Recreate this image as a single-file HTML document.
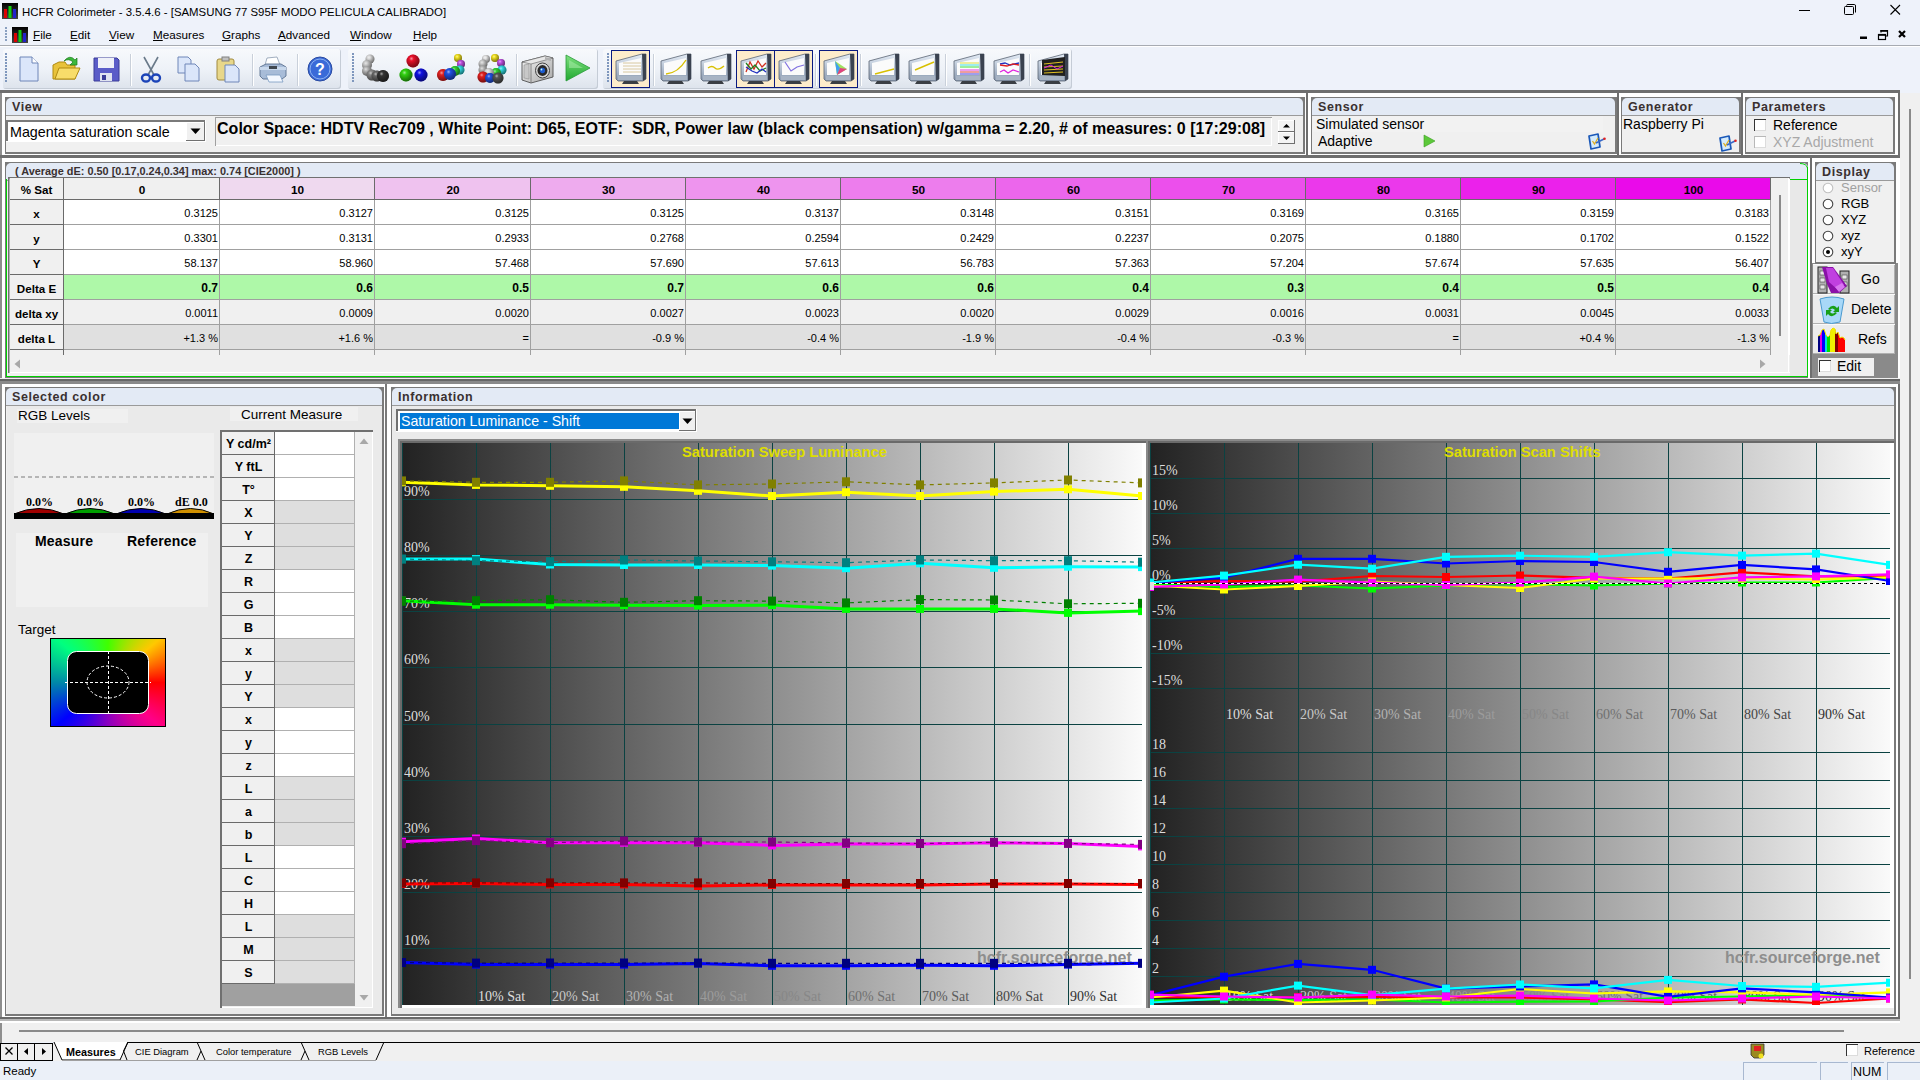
<!DOCTYPE html>
<html><head><meta charset="utf-8"><title>HCFR Colorimeter</title>
<style>
html,body{margin:0;padding:0;width:1920px;height:1080px;overflow:hidden;background:#eef2fa;font-family:"Liberation Sans",sans-serif}
body>div,body>svg{position:absolute;box-sizing:border-box}
.t{white-space:pre}
.inv{font-family:"Liberation Serif",serif}
</style></head><body>
<svg style="left:2px;top:3px" width="16" height="16" viewBox="0 0 16 16"><defs><linearGradient id="ig" x1="0" y1="0" x2="0" y2="1"><stop offset="0" stop-color="#000"/><stop offset="1" stop-color="#444"/></linearGradient></defs><rect width="16" height="16" fill="url(#ig)"/><rect x="2" y="6" width="3" height="9" fill="#d00"/><rect x="6.5" y="3" width="3" height="12" fill="#1c1"/><rect x="11" y="6" width="3" height="9" fill="#22c"/></svg>
<div class="t" style="left:22px;top:4px;font-size:11.4px;line-height:16px;color:#000">HCFR Colorimeter - 3.5.4.6 - [SAMSUNG 77 S95F MODO PELICULA CALIBRADO]</div>
<svg style="left:1790px;top:0" width="130" height="22"><line x1="9" y1="10.5" x2="20" y2="10.5" stroke="#000" stroke-width="1"/><rect x="54.5" y="6.5" width="9" height="8" rx="1" fill="none" stroke="#000"/><path d="M56.5 5.5Q56.5 4.5 58 4.5H64.5Q65.5 4.5 65.5 6V12.5" fill="none" stroke="#000"/><path d="M100.5 5L110 14.5M110 5L100.5 14.5" stroke="#000" stroke-width="1.1"/></svg>
<svg style="left:4px;top:27px" width="4" height="14"><rect x="1" y="0" width="2" height="2" fill="#8aa0c0"/><rect x="1" y="3" width="2" height="2" fill="#8aa0c0"/><rect x="1" y="6" width="2" height="2" fill="#8aa0c0"/><rect x="1" y="9" width="2" height="2" fill="#8aa0c0"/><rect x="1" y="12" width="2" height="2" fill="#8aa0c0"/></svg>
<svg style="left:12px;top:27px" width="16" height="16" viewBox="0 0 16 16"><defs><linearGradient id="ig" x1="0" y1="0" x2="0" y2="1"><stop offset="0" stop-color="#000"/><stop offset="1" stop-color="#444"/></linearGradient></defs><rect width="16" height="16" fill="url(#ig)"/><rect x="2" y="6" width="3" height="9" fill="#d00"/><rect x="6.5" y="3" width="3" height="12" fill="#1c1"/><rect x="11" y="6" width="3" height="9" fill="#22c"/></svg>
<div class="t" style="left:33px;top:27px;font-size:11.7px;line-height:16px;color:#000"><u>F</u>ile</div>
<div class="t" style="left:70px;top:27px;font-size:11.7px;line-height:16px;color:#000"><u>E</u>dit</div>
<div class="t" style="left:109px;top:27px;font-size:11.7px;line-height:16px;color:#000"><u>V</u>iew</div>
<div class="t" style="left:153px;top:27px;font-size:11.7px;line-height:16px;color:#000"><u>M</u>easures</div>
<div class="t" style="left:222px;top:27px;font-size:11.7px;line-height:16px;color:#000"><u>G</u>raphs</div>
<div class="t" style="left:278px;top:27px;font-size:11.7px;line-height:16px;color:#000"><u>A</u>dvanced</div>
<div class="t" style="left:350px;top:27px;font-size:11.7px;line-height:16px;color:#000"><u>W</u>indow</div>
<div class="t" style="left:413px;top:27px;font-size:11.7px;line-height:16px;color:#000"><u>H</u>elp</div>
<svg style="left:1850px;top:26px" width="70" height="18"><rect x="10" y="10.5" width="7" height="2.5" fill="#000"/><rect x="28.5" y="8.5" width="7" height="5" fill="none" stroke="#000" stroke-width="1.2"/><rect x="28" y="8" width="8" height="1.8" fill="#000"/><path d="M31 6.5V4.5H37.5V10H36" fill="none" stroke="#000" stroke-width="1.2"/><rect x="30.5" y="4" width="7.5" height="1.8" fill="#000"/><path d="M49 5L55 11M55 5L49 11" stroke="#000" stroke-width="2.2"/></svg>
<div style="left:0px;top:45px;width:1920px;height:1px;background:#a7abb2"></div>
<div style="left:0px;top:46px;width:1920px;height:1px;background:#fff"></div>
<div style="left:3px;top:49px;width:338px;height:40px;background:linear-gradient(#f7f9fc 0%,#eef2f8 50%,#dde3ec 100%);border-radius:3px;box-shadow:inset -1px -1px 0 #c5ccd6"></div>
<div style="left:348px;top:49px;width:250px;height:40px;background:linear-gradient(#f7f9fc 0%,#eef2f8 50%,#dde3ec 100%);border-radius:3px;box-shadow:inset -1px -1px 0 #c5ccd6"></div>
<div style="left:603px;top:49px;width:469px;height:40px;background:linear-gradient(#f7f9fc 0%,#eef2f8 50%,#dde3ec 100%);border-radius:3px;box-shadow:inset -1px -1px 0 #c5ccd6"></div>
<svg style="left:5px;top:53px" width="3" height="32"><rect x="0" y="0" width="2" height="2" fill="#7f97bd"/><rect x="0" y="3" width="2" height="2" fill="#7f97bd"/><rect x="0" y="6" width="2" height="2" fill="#7f97bd"/><rect x="0" y="9" width="2" height="2" fill="#7f97bd"/><rect x="0" y="12" width="2" height="2" fill="#7f97bd"/><rect x="0" y="15" width="2" height="2" fill="#7f97bd"/><rect x="0" y="18" width="2" height="2" fill="#7f97bd"/><rect x="0" y="21" width="2" height="2" fill="#7f97bd"/><rect x="0" y="24" width="2" height="2" fill="#7f97bd"/><rect x="0" y="27" width="2" height="2" fill="#7f97bd"/></svg>
<svg style="left:352px;top:53px" width="3" height="32"><rect x="0" y="0" width="2" height="2" fill="#7f97bd"/><rect x="0" y="3" width="2" height="2" fill="#7f97bd"/><rect x="0" y="6" width="2" height="2" fill="#7f97bd"/><rect x="0" y="9" width="2" height="2" fill="#7f97bd"/><rect x="0" y="12" width="2" height="2" fill="#7f97bd"/><rect x="0" y="15" width="2" height="2" fill="#7f97bd"/><rect x="0" y="18" width="2" height="2" fill="#7f97bd"/><rect x="0" y="21" width="2" height="2" fill="#7f97bd"/><rect x="0" y="24" width="2" height="2" fill="#7f97bd"/><rect x="0" y="27" width="2" height="2" fill="#7f97bd"/></svg>
<svg style="left:607px;top:53px" width="3" height="32"><rect x="0" y="0" width="2" height="2" fill="#7f97bd"/><rect x="0" y="3" width="2" height="2" fill="#7f97bd"/><rect x="0" y="6" width="2" height="2" fill="#7f97bd"/><rect x="0" y="9" width="2" height="2" fill="#7f97bd"/><rect x="0" y="12" width="2" height="2" fill="#7f97bd"/><rect x="0" y="15" width="2" height="2" fill="#7f97bd"/><rect x="0" y="18" width="2" height="2" fill="#7f97bd"/><rect x="0" y="21" width="2" height="2" fill="#7f97bd"/><rect x="0" y="24" width="2" height="2" fill="#7f97bd"/><rect x="0" y="27" width="2" height="2" fill="#7f97bd"/></svg>
<div style="left:130px;top:54px;width:1px;height:32px;background:#c9d0da;box-shadow:1px 0 0 #fff"></div>
<div style="left:252px;top:54px;width:1px;height:32px;background:#c9d0da;box-shadow:1px 0 0 #fff"></div>
<div style="left:297px;top:54px;width:1px;height:32px;background:#c9d0da;box-shadow:1px 0 0 #fff"></div>
<div style="left:516px;top:54px;width:1px;height:32px;background:#c9d0da;box-shadow:1px 0 0 #fff"></div>
<div style="left:653px;top:54px;width:1px;height:32px;background:#c9d0da;box-shadow:1px 0 0 #fff"></div>
<div style="left:815px;top:54px;width:1px;height:32px;background:#c9d0da;box-shadow:1px 0 0 #fff"></div>
<div style="left:860px;top:54px;width:1px;height:32px;background:#c9d0da;box-shadow:1px 0 0 #fff"></div>
<div style="left:945px;top:54px;width:1px;height:32px;background:#c9d0da;box-shadow:1px 0 0 #fff"></div>
<div style="left:1029px;top:54px;width:1px;height:32px;background:#c9d0da;box-shadow:1px 0 0 #fff"></div>
<svg style="left:12px;top:53px" width="32" height="32" viewBox="0 0 32 32"><path d="M8 4H20L26 10V28H8Z" fill="#dbe6fa" stroke="#6f86b8"/><path d="M20 4V10H26" fill="#fff" stroke="#6f86b8"/></svg>
<svg style="left:50px;top:53px" width="32" height="32" viewBox="0 0 32 32"><path d="M3 12L9 9H15L17 12H25V26H3Z" fill="#e8c23a" stroke="#b08a10"/><path d="M5 26L9 15H30L25 26Z" fill="#f8dd6a" stroke="#b08a10"/><path d="M14 8Q20 1 25 7L27 5V12H20L23 9Q19 5 14 8Z" fill="#3cb83c" stroke="#1a7a1a" stroke-width=".7"/></svg>
<svg style="left:90px;top:53px" width="32" height="32" viewBox="0 0 32 32"><path d="M4 5H27L29 7V28H4Z" fill="#5a5cc8" stroke="#3a3c98"/><rect x="8" y="5" width="16" height="10" fill="#eef0f8"/><rect x="10" y="20" width="12" height="8" fill="#dfe3f0"/><rect x="12" y="22" width="4" height="5" fill="#3a3c98"/></svg>
<svg style="left:135px;top:53px" width="32" height="32" viewBox="0 0 32 32"><path d="M9 4L19 22M23 4L13 22" stroke="#6a7a8a" stroke-width="1.6"/><ellipse cx="11" cy="25" rx="4" ry="3.5" fill="none" stroke="#1c44b8" stroke-width="2.4"/><ellipse cx="21" cy="25" rx="4" ry="3.5" fill="none" stroke="#1c44b8" stroke-width="2.4"/></svg>
<svg style="left:173px;top:53px" width="32" height="32" viewBox="0 0 32 32"><path d="M5 4H15L18 7V20H5Z" fill="#dbe6fa" stroke="#6f86b8"/><path d="M12 11H22L26 15V28H12Z" fill="#dbe6fa" stroke="#6f86b8"/></svg>
<svg style="left:212px;top:53px" width="32" height="32" viewBox="0 0 32 32"><rect x="5" y="6" width="17" height="21" rx="2" fill="#e8d78a" stroke="#a08a40"/><rect x="10" y="4" width="7" height="4" fill="#c0c0c0" stroke="#808080"/><path d="M13 12H23L27 16V29H13Z" fill="#dbe6fa" stroke="#6f86b8"/></svg>
<svg style="left:257px;top:53px" width="32" height="32" viewBox="0 0 32 32"><path d="M10 5L20 4L23 12H8Z" fill="#fff" stroke="#8a9ab0" stroke-width=".8"/><path d="M3 14L9 11H24L29 14V23L25 26H6L3 23Z" fill="#a8bcd8" stroke="#5a7090" stroke-width=".9"/><path d="M3 14H29V17H3Z" fill="#c8d8ec"/><rect x="12" y="13" width="8" height="3" fill="#404850"/><path d="M9 22H23L26 29H12Z" fill="#f4f8ff" stroke="#7a9ac0" stroke-width=".8"/></svg>
<svg style="left:304px;top:53px" width="32" height="32" viewBox="0 0 32 32"><circle cx="16" cy="16" r="12" fill="#3a6ad8" stroke="#2a4aa0"/><circle cx="16" cy="16" r="10" fill="none" stroke="#8ab0f0" stroke-width="1"/><text x="16" y="22" font-family="Liberation Sans" font-weight="bold" font-size="16" fill="#fff" text-anchor="middle">?</text></svg>
<svg style="left:0;top:0" width="0" height="0"><defs><radialGradient id="bg0" cx="0.38" cy="0.32" r="0.7"><stop offset="0" stop-color="#fff"/><stop offset="0.25" stop-color="#d8d8d8"/><stop offset="1" stop-color="#000" stop-opacity="0.9"/></radialGradient></defs></svg>
<svg style="left:0;top:0" width="0" height="0"><defs><radialGradient id="bg1" cx="0.38" cy="0.32" r="0.7"><stop offset="0" stop-color="#fff"/><stop offset="0.25" stop-color="#c8c8c8"/><stop offset="1" stop-color="#000" stop-opacity="0.9"/></radialGradient></defs></svg>
<svg style="left:0;top:0" width="0" height="0"><defs><radialGradient id="bg2" cx="0.38" cy="0.32" r="0.7"><stop offset="0" stop-color="#fff"/><stop offset="0.25" stop-color="#b8b8b8"/><stop offset="1" stop-color="#000" stop-opacity="0.9"/></radialGradient></defs></svg>
<svg style="left:0;top:0" width="0" height="0"><defs><radialGradient id="bg3" cx="0.38" cy="0.32" r="0.7"><stop offset="0" stop-color="#fff"/><stop offset="0.25" stop-color="#888"/><stop offset="1" stop-color="#000" stop-opacity="0.9"/></radialGradient></defs></svg>
<svg style="left:0;top:0" width="0" height="0"><defs><radialGradient id="bg4" cx="0.38" cy="0.32" r="0.7"><stop offset="0" stop-color="#fff"/><stop offset="0.25" stop-color="#666"/><stop offset="1" stop-color="#000" stop-opacity="0.9"/></radialGradient></defs></svg>
<svg style="left:0;top:0" width="0" height="0"><defs><radialGradient id="bg5" cx="0.38" cy="0.32" r="0.7"><stop offset="0" stop-color="#fff"/><stop offset="0.25" stop-color="#333"/><stop offset="1" stop-color="#000" stop-opacity="0.9"/></radialGradient></defs></svg>
<svg style="left:359px;top:53px" width="32" height="32" viewBox="0 0 32 32"><circle cx="11" cy="6" r="4.5" fill="#d8d8d8"/><circle cx="11" cy="6" r="4.5" fill="url(#bg0)" opacity=".55"/><circle cx="8" cy="12" r="5" fill="#c8c8c8"/><circle cx="8" cy="12" r="5" fill="url(#bg1)" opacity=".55"/><circle cx="8" cy="18" r="5" fill="#b8b8b8"/><circle cx="8" cy="18" r="5" fill="url(#bg2)" opacity=".55"/><circle cx="13" cy="22" r="5.5" fill="#888"/><circle cx="13" cy="22" r="5.5" fill="url(#bg3)" opacity=".55"/><circle cx="18" cy="23" r="5.5" fill="#666"/><circle cx="18" cy="23" r="5.5" fill="url(#bg4)" opacity=".55"/><circle cx="24" cy="23" r="6" fill="#333"/><circle cx="24" cy="23" r="6" fill="url(#bg5)" opacity=".55"/></svg>
<svg style="left:0;top:0" width="0" height="0"><defs><radialGradient id="bg6" cx="0.38" cy="0.32" r="0.7"><stop offset="0" stop-color="#fff"/><stop offset="0.25" stop-color="#e8102a"/><stop offset="1" stop-color="#000" stop-opacity="0.9"/></radialGradient></defs></svg>
<svg style="left:0;top:0" width="0" height="0"><defs><radialGradient id="bg7" cx="0.38" cy="0.32" r="0.7"><stop offset="0" stop-color="#fff"/><stop offset="0.25" stop-color="#30d010"/><stop offset="1" stop-color="#000" stop-opacity="0.9"/></radialGradient></defs></svg>
<svg style="left:0;top:0" width="0" height="0"><defs><radialGradient id="bg8" cx="0.38" cy="0.32" r="0.7"><stop offset="0" stop-color="#fff"/><stop offset="0.25" stop-color="#1010e0"/><stop offset="1" stop-color="#000" stop-opacity="0.9"/></radialGradient></defs></svg>
<svg style="left:397px;top:53px" width="32" height="32" viewBox="0 0 32 32"><circle cx="16" cy="8" r="6.5" fill="#e8102a"/><circle cx="16" cy="8" r="6.5" fill="url(#bg6)" opacity=".55"/><circle cx="9" cy="22" r="6.5" fill="#30d010"/><circle cx="9" cy="22" r="6.5" fill="url(#bg7)" opacity=".55"/><circle cx="24" cy="22" r="6.5" fill="#1010e0"/><circle cx="24" cy="22" r="6.5" fill="url(#bg8)" opacity=".55"/></svg>
<svg style="left:0;top:0" width="0" height="0"><defs><radialGradient id="bg9" cx="0.38" cy="0.32" r="0.7"><stop offset="0" stop-color="#fff"/><stop offset="0.25" stop-color="#f0e020"/><stop offset="1" stop-color="#000" stop-opacity="0.9"/></radialGradient></defs></svg>
<svg style="left:0;top:0" width="0" height="0"><defs><radialGradient id="bg10" cx="0.38" cy="0.32" r="0.7"><stop offset="0" stop-color="#fff"/><stop offset="0.25" stop-color="#c050e0"/><stop offset="1" stop-color="#000" stop-opacity="0.9"/></radialGradient></defs></svg>
<svg style="left:0;top:0" width="0" height="0"><defs><radialGradient id="bg11" cx="0.38" cy="0.32" r="0.7"><stop offset="0" stop-color="#fff"/><stop offset="0.25" stop-color="#30d8e0"/><stop offset="1" stop-color="#000" stop-opacity="0.9"/></radialGradient></defs></svg>
<svg style="left:0;top:0" width="0" height="0"><defs><radialGradient id="bg12" cx="0.38" cy="0.32" r="0.7"><stop offset="0" stop-color="#fff"/><stop offset="0.25" stop-color="#30d030"/><stop offset="1" stop-color="#000" stop-opacity="0.9"/></radialGradient></defs></svg>
<svg style="left:0;top:0" width="0" height="0"><defs><radialGradient id="bg13" cx="0.38" cy="0.32" r="0.7"><stop offset="0" stop-color="#fff"/><stop offset="0.25" stop-color="#e02020"/><stop offset="1" stop-color="#000" stop-opacity="0.9"/></radialGradient></defs></svg>
<svg style="left:0;top:0" width="0" height="0"><defs><radialGradient id="bg14" cx="0.38" cy="0.32" r="0.7"><stop offset="0" stop-color="#fff"/><stop offset="0.25" stop-color="#2050e0"/><stop offset="1" stop-color="#000" stop-opacity="0.9"/></radialGradient></defs></svg>
<svg style="left:436px;top:53px" width="32" height="32" viewBox="0 0 32 32"><circle cx="22" cy="5" r="4" fill="#f0e020"/><circle cx="22" cy="5" r="4" fill="url(#bg9)" opacity=".55"/><circle cx="25" cy="11" r="4" fill="#c050e0"/><circle cx="25" cy="11" r="4" fill="url(#bg10)" opacity=".55"/><circle cx="24" cy="17" r="4.5" fill="#30d8e0"/><circle cx="24" cy="17" r="4.5" fill="url(#bg11)" opacity=".55"/><circle cx="19" cy="18" r="5" fill="#30d030"/><circle cx="19" cy="18" r="5" fill="url(#bg12)" opacity=".55"/><circle cx="7" cy="22" r="6" fill="#e02020"/><circle cx="7" cy="22" r="6" fill="url(#bg13)" opacity=".55"/><circle cx="14" cy="21" r="6" fill="#2050e0"/><circle cx="14" cy="21" r="6" fill="url(#bg14)" opacity=".55"/></svg>
<svg style="left:0;top:0" width="0" height="0"><defs><radialGradient id="bg15" cx="0.38" cy="0.32" r="0.7"><stop offset="0" stop-color="#fff"/><stop offset="0.25" stop-color="#e0e0e0"/><stop offset="1" stop-color="#000" stop-opacity="0.9"/></radialGradient></defs></svg>
<svg style="left:0;top:0" width="0" height="0"><defs><radialGradient id="bg16" cx="0.38" cy="0.32" r="0.7"><stop offset="0" stop-color="#fff"/><stop offset="0.25" stop-color="#555"/><stop offset="1" stop-color="#000" stop-opacity="0.9"/></radialGradient></defs></svg>
<svg style="left:475px;top:53px" width="32" height="32" viewBox="0 0 32 32"><circle cx="11" cy="6" r="4" fill="#e0e0e0"/><circle cx="11" cy="6" r="4" fill="url(#bg15)" opacity=".55"/><circle cx="20" cy="5" r="4" fill="#f0e020"/><circle cx="20" cy="5" r="4" fill="url(#bg9)" opacity=".55"/><circle cx="26" cy="10" r="4" fill="#c050e0"/><circle cx="26" cy="10" r="4" fill="url(#bg10)" opacity=".55"/><circle cx="8" cy="11" r="4.5" fill="#c8c8c8"/><circle cx="8" cy="11" r="4.5" fill="url(#bg1)" opacity=".55"/><circle cx="27" cy="17" r="4.5" fill="#30d8e0"/><circle cx="27" cy="17" r="4.5" fill="url(#bg11)" opacity=".55"/><circle cx="8" cy="17" r="4.5" fill="#b8b8b8"/><circle cx="8" cy="17" r="4.5" fill="url(#bg2)" opacity=".55"/><circle cx="21" cy="20" r="5" fill="#30d030"/><circle cx="21" cy="20" r="5" fill="url(#bg12)" opacity=".55"/><circle cx="14" cy="20" r="5" fill="#d8d8d8"/><circle cx="14" cy="20" r="5" fill="url(#bg0)" opacity=".55"/><circle cx="8" cy="24" r="5.5" fill="#e02020"/><circle cx="8" cy="24" r="5.5" fill="url(#bg13)" opacity=".55"/><circle cx="15" cy="25" r="5" fill="#2050e0"/><circle cx="15" cy="25" r="5" fill="url(#bg14)" opacity=".55"/><circle cx="23" cy="25" r="5.5" fill="#555"/><circle cx="23" cy="25" r="5.5" fill="url(#bg16)" opacity=".55"/></svg>
<svg style="left:521px;top:53px" width="34" height="31" viewBox="0 0 34 31"><defs><linearGradient id="camg" x1="0" y1="0" x2="1" y2="1"><stop offset="0" stop-color="#f4f4f4"/><stop offset="1" stop-color="#a8a8a8"/></linearGradient></defs><path d="M1 9L24 3L32 5V24L10 30L1 27Z" fill="url(#camg)" stroke="#505050" stroke-width=".9"/><path d="M1 9L24 3L32 5L10 11Z" fill="#e8e8e8" stroke="#606060" stroke-width=".6"/><path d="M10 11V30" stroke="#707070" stroke-width=".8"/><path d="M3 12L8 11V26L3 25Z" fill="#c8c8c8" stroke="#888" stroke-width=".5"/><path d="M24 4L30 5.5L30 8L24 6.5Z" fill="#b0b0b0"/><ellipse cx="21.5" cy="17.5" rx="7" ry="7.5" fill="#d8d8d8" stroke="#404040" stroke-width="1"/><ellipse cx="21.5" cy="17.5" rx="5" ry="5.4" fill="#2a2a2a"/><ellipse cx="21.5" cy="17.5" rx="2.6" ry="2.8" fill="#1a5ad0"/><circle cx="20.5" cy="16.5" r="0.9" fill="#cfe"/></svg>
<svg style="left:565px;top:54px" width="27" height="28" viewBox="0 0 27 28"><defs><linearGradient id="plg" x1="0" y1="0" x2="0" y2="1"><stop offset="0" stop-color="#7ee07e"/><stop offset="1" stop-color="#20a830"/></linearGradient></defs><path d="M1 1L25 14L1 27Z" fill="url(#plg)" stroke="#2a9a3a" stroke-width=".8"/><path d="M4 6L18 14L4 14Z" fill="#b0f0b0" opacity=".5"/></svg>
<div style="left:611px;top:50px;width:39px;height:38px;background:#fdeccb;border:1.5px solid #0a1a80;box-sizing:border-box"></div>
<svg style="left:615px;top:53px" width="34" height="34" viewBox="0 0 34 34"><defs><linearGradient id="mg" x1="0" y1="0" x2="0" y2="1"><stop offset="0" stop-color="#e4ecf6"/><stop offset="1" stop-color="#8a9ab0"/></linearGradient></defs><path d="M1 8L27 1H31V26L28 28H3L1 26Z" fill="url(#mg)" stroke="#5a6474" stroke-width=".8"/><path d="M27 1H31V26L28 28Z" fill="#3a4250"/><path d="M4 10L26 5V22H4Z" fill="#fbfbfb"/><g stroke="#d8c8a0" stroke-width="1"><path d="M8 10H26M8 13H26M8 16H26M8 19H26"/></g><path d="M3 23H27V27H3Z" fill="#a8b4c4"/><path d="M9 28H22L24 31H7Z" fill="#3a3e44"/></svg>
<svg style="left:660px;top:53px" width="34" height="34" viewBox="0 0 34 34"><defs><linearGradient id="mg" x1="0" y1="0" x2="0" y2="1"><stop offset="0" stop-color="#e4ecf6"/><stop offset="1" stop-color="#8a9ab0"/></linearGradient></defs><path d="M1 8L27 1H31V26L28 28H3L1 26Z" fill="url(#mg)" stroke="#5a6474" stroke-width=".8"/><path d="M27 1H31V26L28 28Z" fill="#3a4250"/><path d="M4 10L26 5V22H4Z" fill="#fbfbfb"/><path d="M6 21Q18 20 26 7" stroke="#d8c000" stroke-width="1.4" fill="none"/><path d="M3 23H27V27H3Z" fill="#a8b4c4"/><path d="M9 28H22L24 31H7Z" fill="#3a3e44"/></svg>
<svg style="left:700px;top:53px" width="34" height="34" viewBox="0 0 34 34"><defs><linearGradient id="mg" x1="0" y1="0" x2="0" y2="1"><stop offset="0" stop-color="#e4ecf6"/><stop offset="1" stop-color="#8a9ab0"/></linearGradient></defs><path d="M1 8L27 1H31V26L28 28H3L1 26Z" fill="url(#mg)" stroke="#5a6474" stroke-width=".8"/><path d="M27 1H31V26L28 28Z" fill="#3a4250"/><path d="M4 10L26 5V22H4Z" fill="#fbfbfb"/><path d="M8 15Q12 12 15 15T24 13" stroke="#d8c000" stroke-width="1.4" fill="none"/><path d="M3 23H27V27H3Z" fill="#a8b4c4"/><path d="M9 28H22L24 31H7Z" fill="#3a3e44"/></svg>
<div style="left:736px;top:50px;width:39px;height:38px;background:#fdeccb;border:1.5px solid #0a1a80;box-sizing:border-box"></div>
<svg style="left:740px;top:53px" width="34" height="34" viewBox="0 0 34 34"><defs><linearGradient id="mg" x1="0" y1="0" x2="0" y2="1"><stop offset="0" stop-color="#e4ecf6"/><stop offset="1" stop-color="#8a9ab0"/></linearGradient></defs><path d="M1 8L27 1H31V26L28 28H3L1 26Z" fill="url(#mg)" stroke="#5a6474" stroke-width=".8"/><path d="M27 1H31V26L28 28Z" fill="#3a4250"/><path d="M4 10L26 5V22H4Z" fill="#fbfbfb"/><path d="M6 19L10 9L14 16L18 8L22 14L26 10" stroke="#d03020" stroke-width="1.3" fill="none"/><path d="M6 10L11 16L15 12L20 18L26 15" stroke="#208020" stroke-width="1.3" fill="none"/><path d="M6 14L12 18L17 20L22 16L26 19" stroke="#2030c0" stroke-width="1.3" fill="none"/><path d="M3 23H27V27H3Z" fill="#a8b4c4"/><path d="M9 28H22L24 31H7Z" fill="#3a3e44"/></svg>
<div style="left:774px;top:50px;width:39px;height:38px;background:#fdeccb;border:1.5px solid #0a1a80;box-sizing:border-box"></div>
<svg style="left:778px;top:53px" width="34" height="34" viewBox="0 0 34 34"><defs><linearGradient id="mg" x1="0" y1="0" x2="0" y2="1"><stop offset="0" stop-color="#e4ecf6"/><stop offset="1" stop-color="#8a9ab0"/></linearGradient></defs><path d="M1 8L27 1H31V26L28 28H3L1 26Z" fill="url(#mg)" stroke="#5a6474" stroke-width=".8"/><path d="M27 1H31V26L28 28Z" fill="#3a4250"/><path d="M4 10L26 5V22H4Z" fill="#fbfbfb"/><path d="M7 9L13 18L19 14L26 12" stroke="#8070e0" stroke-width="1.2" fill="none"/><path d="M3 23H27V27H3Z" fill="#a8b4c4"/><path d="M9 28H22L24 31H7Z" fill="#3a3e44"/></svg>
<div style="left:819px;top:50px;width:39px;height:38px;background:#fdeccb;border:1.5px solid #0a1a80;box-sizing:border-box"></div>
<svg style="left:823px;top:53px" width="34" height="34" viewBox="0 0 34 34"><defs><linearGradient id="mg" x1="0" y1="0" x2="0" y2="1"><stop offset="0" stop-color="#e4ecf6"/><stop offset="1" stop-color="#8a9ab0"/></linearGradient></defs><path d="M1 8L27 1H31V26L28 28H3L1 26Z" fill="url(#mg)" stroke="#5a6474" stroke-width=".8"/><path d="M27 1H31V26L28 28Z" fill="#3a4250"/><path d="M4 10L26 5V22H4Z" fill="#fbfbfb"/><path d="M12 8L24 16L14 22Z" fill="#a0e060"/><path d="M12 8L17 15L14 22Z" fill="#40a0f0"/><path d="M17 15L24 16L14 22Z" fill="#e04080"/><path d="M3 23H27V27H3Z" fill="#a8b4c4"/><path d="M9 28H22L24 31H7Z" fill="#3a3e44"/></svg>
<svg style="left:868px;top:53px" width="34" height="34" viewBox="0 0 34 34"><defs><linearGradient id="mg" x1="0" y1="0" x2="0" y2="1"><stop offset="0" stop-color="#e4ecf6"/><stop offset="1" stop-color="#8a9ab0"/></linearGradient></defs><path d="M1 8L27 1H31V26L28 28H3L1 26Z" fill="url(#mg)" stroke="#5a6474" stroke-width=".8"/><path d="M27 1H31V26L28 28Z" fill="#3a4250"/><path d="M4 10L26 5V22H4Z" fill="#fbfbfb"/><path d="M7 21L26 16" stroke="#d8c000" stroke-width="1.4"/><path d="M3 23H27V27H3Z" fill="#a8b4c4"/><path d="M9 28H22L24 31H7Z" fill="#3a3e44"/></svg>
<svg style="left:908px;top:53px" width="34" height="34" viewBox="0 0 34 34"><defs><linearGradient id="mg" x1="0" y1="0" x2="0" y2="1"><stop offset="0" stop-color="#e4ecf6"/><stop offset="1" stop-color="#8a9ab0"/></linearGradient></defs><path d="M1 8L27 1H31V26L28 28H3L1 26Z" fill="url(#mg)" stroke="#5a6474" stroke-width=".8"/><path d="M27 1H31V26L28 28Z" fill="#3a4250"/><path d="M4 10L26 5V22H4Z" fill="#fbfbfb"/><path d="M7 17L26 9" stroke="#d8c000" stroke-width="1.4"/><path d="M3 23H27V27H3Z" fill="#a8b4c4"/><path d="M9 28H22L24 31H7Z" fill="#3a3e44"/></svg>
<svg style="left:953px;top:53px" width="34" height="34" viewBox="0 0 34 34"><defs><linearGradient id="mg" x1="0" y1="0" x2="0" y2="1"><stop offset="0" stop-color="#e4ecf6"/><stop offset="1" stop-color="#8a9ab0"/></linearGradient></defs><path d="M1 8L27 1H31V26L28 28H3L1 26Z" fill="url(#mg)" stroke="#5a6474" stroke-width=".8"/><path d="M27 1H31V26L28 28Z" fill="#3a4250"/><path d="M4 10L26 5V22H4Z" fill="#fbfbfb"/><path d="M7 10H26" stroke="#e0e040"/><path d="M7 12H26" stroke="#40e0e0"/><path d="M7 14H26" stroke="#40e040"/><path d="M7 17H26" stroke="#e040e0"/><path d="M7 19H26" stroke="#e04040"/><path d="M7 21H26" stroke="#4040e0"/><path d="M3 23H27V27H3Z" fill="#a8b4c4"/><path d="M9 28H22L24 31H7Z" fill="#3a3e44"/></svg>
<svg style="left:993px;top:53px" width="34" height="34" viewBox="0 0 34 34"><defs><linearGradient id="mg" x1="0" y1="0" x2="0" y2="1"><stop offset="0" stop-color="#e4ecf6"/><stop offset="1" stop-color="#8a9ab0"/></linearGradient></defs><path d="M1 8L27 1H31V26L28 28H3L1 26Z" fill="url(#mg)" stroke="#5a6474" stroke-width=".8"/><path d="M27 1H31V26L28 28Z" fill="#3a4250"/><path d="M4 10L26 5V22H4Z" fill="#fbfbfb"/><path d="M7 11L12 10L17 12L26 10" stroke="#2030c0" stroke-width="1.3" fill="none"/><path d="M7 12L14 13L20 11L26 12" stroke="#e02020" stroke-width="1.3" fill="none"/><path d="M7 19L11 17L15 20L20 17L26 19" stroke="#e020e0" stroke-width="1.3" fill="none"/><path d="M3 23H27V27H3Z" fill="#a8b4c4"/><path d="M9 28H22L24 31H7Z" fill="#3a3e44"/></svg>
<svg style="left:1037px;top:53px" width="34" height="34" viewBox="0 0 34 34"><defs><linearGradient id="mg" x1="0" y1="0" x2="0" y2="1"><stop offset="0" stop-color="#e4ecf6"/><stop offset="1" stop-color="#8a9ab0"/></linearGradient></defs><path d="M1 8L27 1H31V26L28 28H3L1 26Z" fill="url(#mg)" stroke="#5a6474" stroke-width=".8"/><path d="M27 1H31V26L28 28Z" fill="#3a4250"/><path d="M4 10L26 5V22H4Z" fill="#fbfbfb"/><path d="M5 7L28 4V23L5 22Z" fill="#202020"/><path d="M7 11L26 9M7 14L26 13M7 17L26 16M7 20L26 19" stroke="#e0c020" stroke-width="1"/><path d="M7 15L14 12L20 16L26 13" stroke="#e020e0" stroke-width="1" fill="none"/><path d="M3 23H27V27H3Z" fill="#a8b4c4"/><path d="M9 28H22L24 31H7Z" fill="#3a3e44"/></svg>
<div style="left:0px;top:90px;width:1900px;height:3px;background:#6e6e6e"></div>
<div style="left:0px;top:93px;width:2px;height:950px;background:#8e8e8e"></div>
<div style="left:2px;top:93px;width:1898px;height:65px;background:#fff"></div>
<div style="left:5px;top:97px;width:1300px;height:57px;background:#7a7a7a"></div>
<div style="left:6px;top:98px;width:1297px;height:17px;background:#e3eaf5;border-radius:5px 5px 0 0"></div>
<div style="left:6px;top:115px;width:1297px;height:1px;background:#9a9a9a"></div>
<div style="left:6px;top:116px;width:1297px;height:36px;background:#f0f0f0"></div>
<div class="t" style="left:12px;top:100px;font-weight:bold;font-size:12.5px;line-height:15px;color:#3a3030;letter-spacing:.6px;">View</div>
<div style="left:1306px;top:93px;width:2px;height:62px;background:#6e6e6e"></div>
<div style="left:1311px;top:97px;width:306px;height:57px;background:#7a7a7a"></div>
<div style="left:1312px;top:98px;width:303px;height:17px;background:#e3eaf5;border-radius:5px 5px 0 0"></div>
<div style="left:1312px;top:115px;width:303px;height:1px;background:#9a9a9a"></div>
<div style="left:1312px;top:116px;width:303px;height:36px;background:#f0f0f0"></div>
<div class="t" style="left:1318px;top:100px;font-weight:bold;font-size:12.5px;line-height:15px;color:#3a3030;letter-spacing:.6px;">Sensor</div>
<div style="left:1617px;top:93px;width:2px;height:62px;background:#6e6e6e"></div>
<div style="left:1621px;top:97px;width:120px;height:57px;background:#7a7a7a"></div>
<div style="left:1622px;top:98px;width:117px;height:17px;background:#e3eaf5;border-radius:5px 5px 0 0"></div>
<div style="left:1622px;top:115px;width:117px;height:1px;background:#9a9a9a"></div>
<div style="left:1622px;top:116px;width:117px;height:36px;background:#f0f0f0"></div>
<div class="t" style="left:1628px;top:100px;font-weight:bold;font-size:12.5px;line-height:15px;color:#3a3030;letter-spacing:.6px;">Generator</div>
<div style="left:1741px;top:93px;width:2px;height:62px;background:#6e6e6e"></div>
<div style="left:1745px;top:97px;width:150px;height:57px;background:#7a7a7a"></div>
<div style="left:1746px;top:98px;width:147px;height:17px;background:#e3eaf5;border-radius:5px 5px 0 0"></div>
<div style="left:1746px;top:115px;width:147px;height:1px;background:#9a9a9a"></div>
<div style="left:1746px;top:116px;width:147px;height:36px;background:#f0f0f0"></div>
<div class="t" style="left:1752px;top:100px;font-weight:bold;font-size:12.5px;line-height:15px;color:#3a3030;letter-spacing:.6px;">Parameters</div>
<div style="left:1898px;top:93px;width:2px;height:927px;background:#6e6e6e"></div>
<div style="left:0px;top:155px;width:1900px;height:3px;background:#6e6e6e"></div>
<div style="left:1900px;top:93px;width:20px;height:950px;background:#f0f0f0"></div>
<div style="left:1909px;top:109px;width:2px;height:870px;background:#8a8a8a"></div>
<div style="left:6px;top:120px;width:200px;height:22px;background:#7a7a7a;box-shadow:inset -1px -1px 0 #fff"></div>
<div style="left:8px;top:122px;width:197px;height:19px;background:#fff"></div>
<div class="t" style="left:10px;top:123px;font-size:14.3px;line-height:18px;color:#000">Magenta saturation scale</div>
<div style="left:186px;top:122px;width:19px;height:19px;background:#f0f0f0;box-shadow:inset -1px -1px 0 #707070,inset 1px 1px 0 #fff"></div>
<svg style="left:190px;top:128px" width="11" height="7"><path d="M0.5 0.5H10.5L5.5 6Z" fill="#000"/></svg>
<div style="left:215px;top:117px;width:1057px;height:29px;background:#f0f0f0;box-shadow:inset 1px 1px 0 #a0a0a0,inset -1px -1px 0 #fff"></div>
<div class="t" style="left:217px;top:119px;font-weight:bold;font-size:16px;line-height:20px;color:#000;letter-spacing:.03px">Color Space: HDTV Rec709 , White Point: D65, EOTF:&nbsp; SDR, Power law (black compensation) w/gamma = 2.20, # of measures: 0 [17:29:08]</div>
<div style="left:1278px;top:120px;width:17px;height:12px;background:#f4f4f4;box-shadow:inset -1px -1px 0 #707070,inset 1px 1px 0 #fff"></div>
<svg style="left:1281px;top:121px" width="11" height="10"><path d="M2 6.5L5.5 3L9 6.5Z" fill="#000"/></svg>
<div style="left:1278px;top:132px;width:17px;height:12px;background:#f4f4f4;box-shadow:inset -1px -1px 0 #707070,inset 1px 1px 0 #fff"></div>
<svg style="left:1281px;top:133px" width="11" height="10"><path d="M2 3.5H9L5.5 7Z" fill="#000"/></svg>
<div style="left:1313px;top:116px;width:290px;height:16px;background:#f2f2f2"></div>
<div class="t" style="left:1316px;top:116px;font-size:14px;line-height:17px;color:#000">Simulated sensor</div>
<div class="t" style="left:1318px;top:133px;font-size:14px;line-height:17px;color:#000">Adaptive</div>
<svg style="left:1423px;top:134px" width="14" height="14"><path d="M1 1L12 7L1 13Z" fill="#5cc83a" stroke="#3aa020" stroke-width=".6"/></svg>
<svg style="left:1587px;top:131px" width="20" height="20" viewBox="0 0 20 20"><path d="M2 5L11 3L13 16L4 18Z" fill="#d4ebfc" stroke="#1a58b8" stroke-width="1.7" stroke-linejoin="round"/><path d="M5.5 10L7.5 13L11 7" fill="none" stroke="#e0b020" stroke-width="1.3"/><path d="M9 12L17 8" stroke="#3a6ac8" stroke-width="1.6"/><circle cx="17.5" cy="7.8" r="1.3" fill="#e02020"/></svg>
<div class="t" style="left:1623px;top:116px;font-size:14px;line-height:17px;color:#000">Raspberry Pi</div>
<svg style="left:1718px;top:133px" width="20" height="20" viewBox="0 0 20 20"><path d="M2 5L11 3L13 16L4 18Z" fill="#d4ebfc" stroke="#1a58b8" stroke-width="1.7" stroke-linejoin="round"/><path d="M5.5 10L7.5 13L11 7" fill="none" stroke="#e0b020" stroke-width="1.3"/><path d="M9 12L17 8" stroke="#3a6ac8" stroke-width="1.6"/><circle cx="17.5" cy="7.8" r="1.3" fill="#e02020"/></svg>
<div style="left:1754px;top:119px;width:12px;height:12px;background:#fff;box-shadow:inset 1px 1px 0 #333,inset -1px -1px 0 #dcdcdc"></div>
<div class="t" style="left:1773px;top:117px;font-size:14px;line-height:17px;color:#000">Reference</div>
<div style="left:1754px;top:136px;width:12px;height:12px;background:#fff;box-shadow:inset 1px 1px 0 #b8b8b8,inset -1px -1px 0 #dcdcdc"></div>
<div class="t" style="left:1773px;top:134px;font-size:14px;line-height:17px;color:#a8a8a8">XYZ Adjustment</div>
<div style="left:2px;top:158px;width:1898px;height:222px;background:#fff"></div>
<div style="left:5px;top:162px;width:1805px;height:216px;background:#7a7a7a"></div>
<div style="left:6px;top:163px;width:1802px;height:17px;background:#e3eaf5;border-radius:5px 5px 0 0"></div>
<div style="left:6px;top:180px;width:1802px;height:1px;background:#9a9a9a"></div>
<div style="left:6px;top:181px;width:1802px;height:195px;background:#f0f0f0"></div>
<div class="t" style="left:15px;top:164px;font-weight:bold;font-size:10.9px;line-height:14px;color:#3a3030">( Average dE: 0.50 [0.17,0.24,0.34] max: 0.74 [CIE2000] )</div>
<div style="left:6px;top:179px;width:1px;height:198px;background:#00d000"></div>
<div style="left:6px;top:376px;width:1802px;height:1px;background:#00d000"></div>
<div style="left:1807px;top:167px;width:1px;height:210px;background:#00d000"></div>
<div style="left:1790px;top:179px;width:17px;height:1px;background:#00d000"></div>
<svg style="left:1800px;top:163px" width="9" height="6"><path d="M0 0.5Q6.5 0.5 7.5 5" fill="none" stroke="#00d000"/></svg>
<div style="left:1790px;top:180px;width:17px;height:196px;background:#e8e8e8"></div>
<div style="left:8px;top:177px;width:1782px;height:196px;background:#f0f0f0;box-shadow:inset 1.5px 1.5px 0 #707070,inset -1px -1px 0 #fff"></div>
<div style="left:10px;top:178px;width:53px;height:21px;background:#f0f0f0"></div>
<div style="left:10px;top:199px;width:53px;height:1px;background:#6a6a6a"></div>
<div class="t" style="left:10px;top:179px;width:53px;text-align:center;font-weight:bold;font-size:11.6px;line-height:22px;color:#000">% Sat</div>
<div style="left:10px;top:200px;width:53px;height:24px;background:#f0f0f0"></div>
<div style="left:10px;top:224px;width:53px;height:1px;background:#6a6a6a"></div>
<div class="t" style="left:10px;top:201px;width:53px;text-align:center;font-weight:bold;font-size:11.6px;line-height:25px;color:#000">x</div>
<div style="left:10px;top:225px;width:53px;height:24px;background:#f0f0f0"></div>
<div style="left:10px;top:249px;width:53px;height:1px;background:#6a6a6a"></div>
<div class="t" style="left:10px;top:226px;width:53px;text-align:center;font-weight:bold;font-size:11.6px;line-height:25px;color:#000">y</div>
<div style="left:10px;top:250px;width:53px;height:24px;background:#f0f0f0"></div>
<div style="left:10px;top:274px;width:53px;height:1px;background:#6a6a6a"></div>
<div class="t" style="left:10px;top:251px;width:53px;text-align:center;font-weight:bold;font-size:11.6px;line-height:25px;color:#000">Y</div>
<div style="left:10px;top:275px;width:53px;height:24px;background:#f0f0f0"></div>
<div style="left:10px;top:299px;width:53px;height:1px;background:#6a6a6a"></div>
<div class="t" style="left:10px;top:276px;width:53px;text-align:center;font-weight:bold;font-size:11.6px;line-height:25px;color:#000">Delta E</div>
<div style="left:10px;top:300px;width:53px;height:24px;background:#f0f0f0"></div>
<div style="left:10px;top:324px;width:53px;height:1px;background:#6a6a6a"></div>
<div class="t" style="left:10px;top:301px;width:53px;text-align:center;font-weight:bold;font-size:11.6px;line-height:25px;color:#000">delta xy</div>
<div style="left:10px;top:325px;width:53px;height:24px;background:#f0f0f0"></div>
<div style="left:10px;top:349px;width:53px;height:1px;background:#6a6a6a"></div>
<div class="t" style="left:10px;top:326px;width:53px;text-align:center;font-weight:bold;font-size:11.6px;line-height:25px;color:#000">delta L</div>
<div style="left:10px;top:350px;width:53px;height:5px;background:#f0f0f0"></div>
<div style="left:63px;top:178px;width:1px;height:177px;background:#6a6a6a"></div>
<div style="left:64px;top:178px;width:156px;height:22px;background:#f0f0f0"></div>
<div style="left:219px;top:178px;width:1px;height:22px;background:#6a6a6a"></div>
<div class="t" style="left:64px;top:179px;width:156px;text-align:center;font-weight:bold;font-size:11.8px;line-height:22px;color:#000">0</div>
<div style="left:220px;top:178px;width:155px;height:22px;background:rgb(239,217,239)"></div>
<div style="left:374px;top:178px;width:1px;height:22px;background:#6a6a6a"></div>
<div class="t" style="left:220px;top:179px;width:155px;text-align:center;font-weight:bold;font-size:11.8px;line-height:22px;color:#000">10</div>
<div style="left:375px;top:178px;width:156px;height:22px;background:rgb(239,194,239)"></div>
<div style="left:530px;top:178px;width:1px;height:22px;background:#6a6a6a"></div>
<div class="t" style="left:375px;top:179px;width:156px;text-align:center;font-weight:bold;font-size:11.8px;line-height:22px;color:#000">20</div>
<div style="left:531px;top:178px;width:155px;height:22px;background:rgb(238,171,238)"></div>
<div style="left:685px;top:178px;width:1px;height:22px;background:#6a6a6a"></div>
<div class="t" style="left:531px;top:179px;width:155px;text-align:center;font-weight:bold;font-size:11.8px;line-height:22px;color:#000">30</div>
<div style="left:686px;top:178px;width:155px;height:22px;background:rgb(238,148,238)"></div>
<div style="left:840px;top:178px;width:1px;height:22px;background:#6a6a6a"></div>
<div class="t" style="left:686px;top:179px;width:155px;text-align:center;font-weight:bold;font-size:11.8px;line-height:22px;color:#000">40</div>
<div style="left:841px;top:178px;width:155px;height:22px;background:rgb(237,125,237)"></div>
<div style="left:995px;top:178px;width:1px;height:22px;background:#6a6a6a"></div>
<div class="t" style="left:841px;top:179px;width:155px;text-align:center;font-weight:bold;font-size:11.8px;line-height:22px;color:#000">50</div>
<div style="left:996px;top:178px;width:155px;height:22px;background:rgb(236,102,236)"></div>
<div style="left:1150px;top:178px;width:1px;height:22px;background:#6a6a6a"></div>
<div class="t" style="left:996px;top:179px;width:155px;text-align:center;font-weight:bold;font-size:11.8px;line-height:22px;color:#000">60</div>
<div style="left:1151px;top:178px;width:155px;height:22px;background:rgb(236,79,236)"></div>
<div style="left:1305px;top:178px;width:1px;height:22px;background:#6a6a6a"></div>
<div class="t" style="left:1151px;top:179px;width:155px;text-align:center;font-weight:bold;font-size:11.8px;line-height:22px;color:#000">70</div>
<div style="left:1306px;top:178px;width:155px;height:22px;background:rgb(235,56,235)"></div>
<div style="left:1460px;top:178px;width:1px;height:22px;background:#6a6a6a"></div>
<div class="t" style="left:1306px;top:179px;width:155px;text-align:center;font-weight:bold;font-size:11.8px;line-height:22px;color:#000">80</div>
<div style="left:1461px;top:178px;width:155px;height:22px;background:rgb(235,33,235)"></div>
<div style="left:1615px;top:178px;width:1px;height:22px;background:#6a6a6a"></div>
<div class="t" style="left:1461px;top:179px;width:155px;text-align:center;font-weight:bold;font-size:11.8px;line-height:22px;color:#000">90</div>
<div style="left:1616px;top:178px;width:155px;height:22px;background:rgb(234,10,234)"></div>
<div style="left:1770px;top:178px;width:1px;height:22px;background:#6a6a6a"></div>
<div class="t" style="left:1616px;top:179px;width:155px;text-align:center;font-weight:bold;font-size:11.8px;line-height:22px;color:#000">100</div>
<div style="left:64px;top:199px;width:1706px;height:1px;background:#6a6a6a"></div>
<div style="left:64px;top:200px;width:1706px;height:24px;background:#fff"></div>
<div style="left:64px;top:224px;width:1706px;height:1px;background:#a0a0a0"></div>
<div style="left:219px;top:200px;width:1px;height:25px;background:#a0a0a0"></div>
<div class="t" style="left:64px;top:201px;width:154px;text-align:right;font-size:11px;line-height:25px;color:#000">0.3125</div>
<div style="left:374px;top:200px;width:1px;height:25px;background:#a0a0a0"></div>
<div class="t" style="left:220px;top:201px;width:153px;text-align:right;font-size:11px;line-height:25px;color:#000">0.3127</div>
<div style="left:530px;top:200px;width:1px;height:25px;background:#a0a0a0"></div>
<div class="t" style="left:375px;top:201px;width:154px;text-align:right;font-size:11px;line-height:25px;color:#000">0.3125</div>
<div style="left:685px;top:200px;width:1px;height:25px;background:#a0a0a0"></div>
<div class="t" style="left:531px;top:201px;width:153px;text-align:right;font-size:11px;line-height:25px;color:#000">0.3125</div>
<div style="left:840px;top:200px;width:1px;height:25px;background:#a0a0a0"></div>
<div class="t" style="left:686px;top:201px;width:153px;text-align:right;font-size:11px;line-height:25px;color:#000">0.3137</div>
<div style="left:995px;top:200px;width:1px;height:25px;background:#a0a0a0"></div>
<div class="t" style="left:841px;top:201px;width:153px;text-align:right;font-size:11px;line-height:25px;color:#000">0.3148</div>
<div style="left:1150px;top:200px;width:1px;height:25px;background:#a0a0a0"></div>
<div class="t" style="left:996px;top:201px;width:153px;text-align:right;font-size:11px;line-height:25px;color:#000">0.3151</div>
<div style="left:1305px;top:200px;width:1px;height:25px;background:#a0a0a0"></div>
<div class="t" style="left:1151px;top:201px;width:153px;text-align:right;font-size:11px;line-height:25px;color:#000">0.3169</div>
<div style="left:1460px;top:200px;width:1px;height:25px;background:#a0a0a0"></div>
<div class="t" style="left:1306px;top:201px;width:153px;text-align:right;font-size:11px;line-height:25px;color:#000">0.3165</div>
<div style="left:1615px;top:200px;width:1px;height:25px;background:#a0a0a0"></div>
<div class="t" style="left:1461px;top:201px;width:153px;text-align:right;font-size:11px;line-height:25px;color:#000">0.3159</div>
<div style="left:1770px;top:200px;width:1px;height:25px;background:#a0a0a0"></div>
<div class="t" style="left:1616px;top:201px;width:153px;text-align:right;font-size:11px;line-height:25px;color:#000">0.3183</div>
<div style="left:64px;top:225px;width:1706px;height:24px;background:#fff"></div>
<div style="left:64px;top:249px;width:1706px;height:1px;background:#a0a0a0"></div>
<div style="left:219px;top:225px;width:1px;height:25px;background:#a0a0a0"></div>
<div class="t" style="left:64px;top:226px;width:154px;text-align:right;font-size:11px;line-height:25px;color:#000">0.3301</div>
<div style="left:374px;top:225px;width:1px;height:25px;background:#a0a0a0"></div>
<div class="t" style="left:220px;top:226px;width:153px;text-align:right;font-size:11px;line-height:25px;color:#000">0.3131</div>
<div style="left:530px;top:225px;width:1px;height:25px;background:#a0a0a0"></div>
<div class="t" style="left:375px;top:226px;width:154px;text-align:right;font-size:11px;line-height:25px;color:#000">0.2933</div>
<div style="left:685px;top:225px;width:1px;height:25px;background:#a0a0a0"></div>
<div class="t" style="left:531px;top:226px;width:153px;text-align:right;font-size:11px;line-height:25px;color:#000">0.2768</div>
<div style="left:840px;top:225px;width:1px;height:25px;background:#a0a0a0"></div>
<div class="t" style="left:686px;top:226px;width:153px;text-align:right;font-size:11px;line-height:25px;color:#000">0.2594</div>
<div style="left:995px;top:225px;width:1px;height:25px;background:#a0a0a0"></div>
<div class="t" style="left:841px;top:226px;width:153px;text-align:right;font-size:11px;line-height:25px;color:#000">0.2429</div>
<div style="left:1150px;top:225px;width:1px;height:25px;background:#a0a0a0"></div>
<div class="t" style="left:996px;top:226px;width:153px;text-align:right;font-size:11px;line-height:25px;color:#000">0.2237</div>
<div style="left:1305px;top:225px;width:1px;height:25px;background:#a0a0a0"></div>
<div class="t" style="left:1151px;top:226px;width:153px;text-align:right;font-size:11px;line-height:25px;color:#000">0.2075</div>
<div style="left:1460px;top:225px;width:1px;height:25px;background:#a0a0a0"></div>
<div class="t" style="left:1306px;top:226px;width:153px;text-align:right;font-size:11px;line-height:25px;color:#000">0.1880</div>
<div style="left:1615px;top:225px;width:1px;height:25px;background:#a0a0a0"></div>
<div class="t" style="left:1461px;top:226px;width:153px;text-align:right;font-size:11px;line-height:25px;color:#000">0.1702</div>
<div style="left:1770px;top:225px;width:1px;height:25px;background:#a0a0a0"></div>
<div class="t" style="left:1616px;top:226px;width:153px;text-align:right;font-size:11px;line-height:25px;color:#000">0.1522</div>
<div style="left:64px;top:250px;width:1706px;height:24px;background:#fff"></div>
<div style="left:64px;top:274px;width:1706px;height:1px;background:#a0a0a0"></div>
<div style="left:219px;top:250px;width:1px;height:25px;background:#a0a0a0"></div>
<div class="t" style="left:64px;top:251px;width:154px;text-align:right;font-size:11px;line-height:25px;color:#000">58.137</div>
<div style="left:374px;top:250px;width:1px;height:25px;background:#a0a0a0"></div>
<div class="t" style="left:220px;top:251px;width:153px;text-align:right;font-size:11px;line-height:25px;color:#000">58.960</div>
<div style="left:530px;top:250px;width:1px;height:25px;background:#a0a0a0"></div>
<div class="t" style="left:375px;top:251px;width:154px;text-align:right;font-size:11px;line-height:25px;color:#000">57.468</div>
<div style="left:685px;top:250px;width:1px;height:25px;background:#a0a0a0"></div>
<div class="t" style="left:531px;top:251px;width:153px;text-align:right;font-size:11px;line-height:25px;color:#000">57.690</div>
<div style="left:840px;top:250px;width:1px;height:25px;background:#a0a0a0"></div>
<div class="t" style="left:686px;top:251px;width:153px;text-align:right;font-size:11px;line-height:25px;color:#000">57.613</div>
<div style="left:995px;top:250px;width:1px;height:25px;background:#a0a0a0"></div>
<div class="t" style="left:841px;top:251px;width:153px;text-align:right;font-size:11px;line-height:25px;color:#000">56.783</div>
<div style="left:1150px;top:250px;width:1px;height:25px;background:#a0a0a0"></div>
<div class="t" style="left:996px;top:251px;width:153px;text-align:right;font-size:11px;line-height:25px;color:#000">57.363</div>
<div style="left:1305px;top:250px;width:1px;height:25px;background:#a0a0a0"></div>
<div class="t" style="left:1151px;top:251px;width:153px;text-align:right;font-size:11px;line-height:25px;color:#000">57.204</div>
<div style="left:1460px;top:250px;width:1px;height:25px;background:#a0a0a0"></div>
<div class="t" style="left:1306px;top:251px;width:153px;text-align:right;font-size:11px;line-height:25px;color:#000">57.674</div>
<div style="left:1615px;top:250px;width:1px;height:25px;background:#a0a0a0"></div>
<div class="t" style="left:1461px;top:251px;width:153px;text-align:right;font-size:11px;line-height:25px;color:#000">57.635</div>
<div style="left:1770px;top:250px;width:1px;height:25px;background:#a0a0a0"></div>
<div class="t" style="left:1616px;top:251px;width:153px;text-align:right;font-size:11px;line-height:25px;color:#000">56.407</div>
<div style="left:64px;top:275px;width:1706px;height:24px;background:#aef8a8"></div>
<div style="left:64px;top:299px;width:1706px;height:1px;background:#a0a0a0"></div>
<div style="left:219px;top:275px;width:1px;height:25px;background:#a0a0a0"></div>
<div class="t" style="left:64px;top:276px;width:154px;text-align:right;font-weight:bold;font-size:12px;line-height:25px;color:#000">0.7</div>
<div style="left:374px;top:275px;width:1px;height:25px;background:#a0a0a0"></div>
<div class="t" style="left:220px;top:276px;width:153px;text-align:right;font-weight:bold;font-size:12px;line-height:25px;color:#000">0.6</div>
<div style="left:530px;top:275px;width:1px;height:25px;background:#a0a0a0"></div>
<div class="t" style="left:375px;top:276px;width:154px;text-align:right;font-weight:bold;font-size:12px;line-height:25px;color:#000">0.5</div>
<div style="left:685px;top:275px;width:1px;height:25px;background:#a0a0a0"></div>
<div class="t" style="left:531px;top:276px;width:153px;text-align:right;font-weight:bold;font-size:12px;line-height:25px;color:#000">0.7</div>
<div style="left:840px;top:275px;width:1px;height:25px;background:#a0a0a0"></div>
<div class="t" style="left:686px;top:276px;width:153px;text-align:right;font-weight:bold;font-size:12px;line-height:25px;color:#000">0.6</div>
<div style="left:995px;top:275px;width:1px;height:25px;background:#a0a0a0"></div>
<div class="t" style="left:841px;top:276px;width:153px;text-align:right;font-weight:bold;font-size:12px;line-height:25px;color:#000">0.6</div>
<div style="left:1150px;top:275px;width:1px;height:25px;background:#a0a0a0"></div>
<div class="t" style="left:996px;top:276px;width:153px;text-align:right;font-weight:bold;font-size:12px;line-height:25px;color:#000">0.4</div>
<div style="left:1305px;top:275px;width:1px;height:25px;background:#a0a0a0"></div>
<div class="t" style="left:1151px;top:276px;width:153px;text-align:right;font-weight:bold;font-size:12px;line-height:25px;color:#000">0.3</div>
<div style="left:1460px;top:275px;width:1px;height:25px;background:#a0a0a0"></div>
<div class="t" style="left:1306px;top:276px;width:153px;text-align:right;font-weight:bold;font-size:12px;line-height:25px;color:#000">0.4</div>
<div style="left:1615px;top:275px;width:1px;height:25px;background:#a0a0a0"></div>
<div class="t" style="left:1461px;top:276px;width:153px;text-align:right;font-weight:bold;font-size:12px;line-height:25px;color:#000">0.5</div>
<div style="left:1770px;top:275px;width:1px;height:25px;background:#a0a0a0"></div>
<div class="t" style="left:1616px;top:276px;width:153px;text-align:right;font-weight:bold;font-size:12px;line-height:25px;color:#000">0.4</div>
<div style="left:64px;top:300px;width:1706px;height:24px;background:#f0f0f0"></div>
<div style="left:64px;top:324px;width:1706px;height:1px;background:#a0a0a0"></div>
<div style="left:219px;top:300px;width:1px;height:25px;background:#a0a0a0"></div>
<div class="t" style="left:64px;top:301px;width:154px;text-align:right;font-size:11px;line-height:25px;color:#000">0.0011</div>
<div style="left:374px;top:300px;width:1px;height:25px;background:#a0a0a0"></div>
<div class="t" style="left:220px;top:301px;width:153px;text-align:right;font-size:11px;line-height:25px;color:#000">0.0009</div>
<div style="left:530px;top:300px;width:1px;height:25px;background:#a0a0a0"></div>
<div class="t" style="left:375px;top:301px;width:154px;text-align:right;font-size:11px;line-height:25px;color:#000">0.0020</div>
<div style="left:685px;top:300px;width:1px;height:25px;background:#a0a0a0"></div>
<div class="t" style="left:531px;top:301px;width:153px;text-align:right;font-size:11px;line-height:25px;color:#000">0.0027</div>
<div style="left:840px;top:300px;width:1px;height:25px;background:#a0a0a0"></div>
<div class="t" style="left:686px;top:301px;width:153px;text-align:right;font-size:11px;line-height:25px;color:#000">0.0023</div>
<div style="left:995px;top:300px;width:1px;height:25px;background:#a0a0a0"></div>
<div class="t" style="left:841px;top:301px;width:153px;text-align:right;font-size:11px;line-height:25px;color:#000">0.0020</div>
<div style="left:1150px;top:300px;width:1px;height:25px;background:#a0a0a0"></div>
<div class="t" style="left:996px;top:301px;width:153px;text-align:right;font-size:11px;line-height:25px;color:#000">0.0029</div>
<div style="left:1305px;top:300px;width:1px;height:25px;background:#a0a0a0"></div>
<div class="t" style="left:1151px;top:301px;width:153px;text-align:right;font-size:11px;line-height:25px;color:#000">0.0016</div>
<div style="left:1460px;top:300px;width:1px;height:25px;background:#a0a0a0"></div>
<div class="t" style="left:1306px;top:301px;width:153px;text-align:right;font-size:11px;line-height:25px;color:#000">0.0031</div>
<div style="left:1615px;top:300px;width:1px;height:25px;background:#a0a0a0"></div>
<div class="t" style="left:1461px;top:301px;width:153px;text-align:right;font-size:11px;line-height:25px;color:#000">0.0045</div>
<div style="left:1770px;top:300px;width:1px;height:25px;background:#a0a0a0"></div>
<div class="t" style="left:1616px;top:301px;width:153px;text-align:right;font-size:11px;line-height:25px;color:#000">0.0033</div>
<div style="left:64px;top:325px;width:1706px;height:24px;background:#e0e0e0"></div>
<div style="left:64px;top:349px;width:1706px;height:1px;background:#a0a0a0"></div>
<div style="left:219px;top:325px;width:1px;height:25px;background:#a0a0a0"></div>
<div class="t" style="left:64px;top:326px;width:154px;text-align:right;font-size:11px;line-height:25px;color:#000">+1.3 %</div>
<div style="left:374px;top:325px;width:1px;height:25px;background:#a0a0a0"></div>
<div class="t" style="left:220px;top:326px;width:153px;text-align:right;font-size:11px;line-height:25px;color:#000">+1.6 %</div>
<div style="left:530px;top:325px;width:1px;height:25px;background:#a0a0a0"></div>
<div class="t" style="left:375px;top:326px;width:154px;text-align:right;font-size:11px;line-height:25px;color:#000">=</div>
<div style="left:685px;top:325px;width:1px;height:25px;background:#a0a0a0"></div>
<div class="t" style="left:531px;top:326px;width:153px;text-align:right;font-size:11px;line-height:25px;color:#000">-0.9 %</div>
<div style="left:840px;top:325px;width:1px;height:25px;background:#a0a0a0"></div>
<div class="t" style="left:686px;top:326px;width:153px;text-align:right;font-size:11px;line-height:25px;color:#000">-0.4 %</div>
<div style="left:995px;top:325px;width:1px;height:25px;background:#a0a0a0"></div>
<div class="t" style="left:841px;top:326px;width:153px;text-align:right;font-size:11px;line-height:25px;color:#000">-1.9 %</div>
<div style="left:1150px;top:325px;width:1px;height:25px;background:#a0a0a0"></div>
<div class="t" style="left:996px;top:326px;width:153px;text-align:right;font-size:11px;line-height:25px;color:#000">-0.4 %</div>
<div style="left:1305px;top:325px;width:1px;height:25px;background:#a0a0a0"></div>
<div class="t" style="left:1151px;top:326px;width:153px;text-align:right;font-size:11px;line-height:25px;color:#000">-0.3 %</div>
<div style="left:1460px;top:325px;width:1px;height:25px;background:#a0a0a0"></div>
<div class="t" style="left:1306px;top:326px;width:153px;text-align:right;font-size:11px;line-height:25px;color:#000">=</div>
<div style="left:1615px;top:325px;width:1px;height:25px;background:#a0a0a0"></div>
<div class="t" style="left:1461px;top:326px;width:153px;text-align:right;font-size:11px;line-height:25px;color:#000">+0.4 %</div>
<div style="left:1770px;top:325px;width:1px;height:25px;background:#a0a0a0"></div>
<div class="t" style="left:1616px;top:326px;width:153px;text-align:right;font-size:11px;line-height:25px;color:#000">-1.3 %</div>
<div style="left:64px;top:350px;width:1706px;height:5px;background:#f0f0f0"></div>
<div style="left:219px;top:350px;width:1px;height:5px;background:#a0a0a0"></div>
<div style="left:374px;top:350px;width:1px;height:5px;background:#a0a0a0"></div>
<div style="left:530px;top:350px;width:1px;height:5px;background:#a0a0a0"></div>
<div style="left:685px;top:350px;width:1px;height:5px;background:#a0a0a0"></div>
<div style="left:840px;top:350px;width:1px;height:5px;background:#a0a0a0"></div>
<div style="left:995px;top:350px;width:1px;height:5px;background:#a0a0a0"></div>
<div style="left:1150px;top:350px;width:1px;height:5px;background:#a0a0a0"></div>
<div style="left:1305px;top:350px;width:1px;height:5px;background:#a0a0a0"></div>
<div style="left:1460px;top:350px;width:1px;height:5px;background:#a0a0a0"></div>
<div style="left:1615px;top:350px;width:1px;height:5px;background:#a0a0a0"></div>
<div style="left:1770px;top:350px;width:1px;height:5px;background:#a0a0a0"></div>
<div style="left:10px;top:355px;width:1780px;height:17px;background:#f0f0f0"></div>
<svg style="left:13px;top:358px" width="10" height="12"><path d="M7 1.5V10.5L1.5 6Z" fill="#a8a8a8"/></svg>
<svg style="left:1758px;top:358px" width="10" height="12"><path d="M2 1.5V10.5L7.5 6Z" fill="#a8a8a8"/></svg>
<div style="left:1771px;top:178px;width:17px;height:177px;background:#f0f0f0"></div>
<div style="left:1779px;top:195px;width:2px;height:141px;background:#8a8a8a"></div>
<div style="left:1788px;top:178px;width:1px;height:195px;background:#fff"></div>
<div style="left:1808px;top:158px;width:2px;height:222px;background:#fff"></div>
<div style="left:1810px;top:158px;width:2px;height:222px;background:#6e6e6e"></div>
<div style="left:1812px;top:158px;width:88px;height:222px;background:#fff"></div>
<div style="left:1812px;top:263px;width:86px;height:117px;background:#8a8a8a"></div>
<div style="left:1815px;top:162px;width:81px;height:102px;background:#7a7a7a"></div>
<div style="left:1816px;top:163px;width:78px;height:17px;background:#e3eaf5;border-radius:5px 5px 0 0"></div>
<div style="left:1816px;top:180px;width:78px;height:1px;background:#9a9a9a"></div>
<div style="left:1816px;top:181px;width:78px;height:81px;background:#f0f0f0"></div>
<div class="t" style="left:1822px;top:165px;font-weight:bold;font-size:12.5px;line-height:15px;color:#3a3030;letter-spacing:.6px;">Display</div>
<svg style="left:1822px;top:182px" width="12" height="12"><circle cx="6" cy="6" r="4.8" fill="#fff" stroke="#c0c0c0" stroke-width="1.1"/></svg>
<div class="t" style="left:1841px;top:180px;font-size:13px;line-height:15px;color:#a0a0a0">Sensor</div>
<svg style="left:1822px;top:198px" width="12" height="12"><circle cx="6" cy="6" r="4.8" fill="#fff" stroke="#444" stroke-width="1.1"/></svg>
<div class="t" style="left:1841px;top:196px;font-size:13px;line-height:15px;color:#000">RGB</div>
<svg style="left:1822px;top:214px" width="12" height="12"><circle cx="6" cy="6" r="4.8" fill="#fff" stroke="#444" stroke-width="1.1"/></svg>
<div class="t" style="left:1841px;top:212px;font-size:13px;line-height:15px;color:#000">XYZ</div>
<svg style="left:1822px;top:230px" width="12" height="12"><circle cx="6" cy="6" r="4.8" fill="#fff" stroke="#444" stroke-width="1.1"/></svg>
<div class="t" style="left:1841px;top:228px;font-size:13px;line-height:15px;color:#000">xyz</div>
<svg style="left:1822px;top:246px" width="12" height="12"><circle cx="6" cy="6" r="4.8" fill="#fff" stroke="#444" stroke-width="1.1"/><circle cx="6" cy="6" r="2" fill="#000"/></svg>
<div class="t" style="left:1841px;top:244px;font-size:13px;line-height:15px;color:#000">xyY</div>
<div style="left:1813px;top:264px;width:82px;height:30px;background:#ececec;box-shadow:inset 0 1px 0 #fafafa,inset -1px -1px 0 #b0b0b0"></div>
<div class="t" style="left:1861px;top:271px;font-size:14px;line-height:17px;color:#000">Go</div>
<div style="left:1813px;top:294px;width:82px;height:30px;background:#ececec;box-shadow:inset 0 1px 0 #fafafa,inset -1px -1px 0 #b0b0b0"></div>
<div class="t" style="left:1851px;top:301px;font-size:14px;line-height:17px;color:#000">Delete</div>
<div style="left:1813px;top:324px;width:82px;height:30px;background:#ececec;box-shadow:inset 0 1px 0 #fafafa,inset -1px -1px 0 #b0b0b0"></div>
<div class="t" style="left:1858px;top:331px;font-size:14px;line-height:17px;color:#000">Refs</div>
<svg style="left:1817px;top:266px" width="34" height="28" viewBox="0 0 34 28"><rect x="1" y="1" width="9" height="26" fill="#b0b0b0" stroke="#222"/><rect x="23" y="5" width="9" height="22" fill="#b0b0b0" stroke="#222"/><g fill="#e8e8e8" stroke="#444" stroke-width=".6"><rect x="3" y="5" width="5" height="4"/><rect x="3" y="12" width="5" height="4"/><rect x="3" y="19" width="5" height="4"/><rect x="25" y="9" width="5" height="4"/><rect x="25" y="16" width="5" height="4"/></g><path d="M5 1H16L30 20L22 27H14L10 18Z" fill="#8a10a8"/><path d="M9 2H16L27 19L21 24L12 16Z" fill="#c040e0"/><path d="M18 21L25 17L28 21L22 26Z" fill="#d878f0"/></svg>
<svg style="left:1818px;top:296px" width="28" height="28" viewBox="0 0 28 28"><path d="M2 3Q14 -1 26 3L22 26Q13 29 6 26Z" fill="#a8d8f8" stroke="#4a9ad0"/><path d="M10 13Q15 7 19 12L21 10V16H15L17 14Q14 11 12 14Z" fill="#18a018"/><path d="M19 17Q14 23 10 18L8 20V14H14L12 16Q15 19 17 16Z" fill="#18a018"/></svg>
<svg style="left:1818px;top:326px" width="32" height="26" viewBox="0 0 32 26"><defs><clipPath id="rc"><path d="M0 26V10L2 9L4 4L6 3L8 9L10 11L12 9L13 4L15 2L17 3L18 8L20 6L22 12L24 11L26 12L27 14V26Z"/></clipPath></defs><g clip-path="url(#rc)"><rect x="0" y="0" width="2" height="26" fill="#000080"/><rect x="2" y="0" width="2" height="26" fill="#e000e0"/><rect x="4" y="0" width="3" height="26" fill="#0000ff"/><rect x="7" y="0" width="2" height="26" fill="#00e0e0"/><rect x="9" y="0" width="3" height="26" fill="#00e000"/><rect x="12" y="0" width="5" height="26" fill="#f0f000"/><rect x="17" y="0" width="3" height="26" fill="#800000"/><rect x="20" y="0" width="7" height="26" fill="#ff0000"/></g><path d="M0 10L2 9L4 4L6 3L8 9L10 11L12 9L13 4L15 2L17 3L18 8L20 6L22 12L24 11L26 12L27 14" fill="none" stroke="#f0e000" stroke-width="1"/></svg>
<div style="left:1818px;top:358px;width:56px;height:18px;background:#f0f0f0"></div>
<div style="left:1819px;top:360px;width:12px;height:12px;background:#fff;box-shadow:inset 1px 1px 0 #333,inset -1px -1px 0 #dcdcdc"></div>
<div class="t" style="left:1837px;top:358px;font-size:14px;line-height:17px;color:#000">Edit</div>
<div style="left:0px;top:378px;width:1900px;height:1px;background:#f0f0f0"></div>
<div style="left:0px;top:379px;width:1900px;height:2px;background:#666"></div>
<div style="left:0px;top:381px;width:1900px;height:3px;background:#8a8a8a"></div>
<div style="left:2px;top:384px;width:1896px;height:633px;background:#fff"></div>
<div style="left:385px;top:384px;width:2px;height:633px;background:#7a7a7a"></div>
<div style="left:5px;top:387px;width:379px;height:629px;background:#7a7a7a"></div>
<div style="left:6px;top:388px;width:376px;height:17px;background:#e3eaf5;border-radius:5px 5px 0 0"></div>
<div style="left:6px;top:405px;width:376px;height:1px;background:#9a9a9a"></div>
<div style="left:6px;top:406px;width:376px;height:608px;background:#f0f0f0"></div>
<div class="t" style="left:12px;top:390px;font-weight:bold;font-size:12.5px;line-height:15px;color:#3a3030;letter-spacing:.6px;">Selected color</div>
<div style="left:391px;top:387px;width:1505px;height:629px;background:#7a7a7a"></div>
<div style="left:392px;top:388px;width:1502px;height:17px;background:#e3eaf5;border-radius:5px 5px 0 0"></div>
<div style="left:392px;top:405px;width:1502px;height:1px;background:#9a9a9a"></div>
<div style="left:392px;top:406px;width:1502px;height:608px;background:#f0f0f0"></div>
<div class="t" style="left:398px;top:390px;font-weight:bold;font-size:12.5px;line-height:15px;color:#3a3030;letter-spacing:.6px;">Information</div>
<div style="left:0px;top:1017px;width:1900px;height:2px;background:#6a6a6a"></div>
<div style="left:0px;top:1019px;width:1900px;height:2px;background:#b8b8b8"></div>
<div style="left:0px;top:1021px;width:1900px;height:2px;background:#fff"></div>
<div style="left:2px;top:1023px;width:1898px;height:19px;background:#f0f0f0"></div>
<div style="left:19px;top:1030px;width:1825px;height:2px;background:#8a8a8a"></div>
<div style="left:7px;top:406px;width:375px;height:608px;background:#eaeaea"></div>
<div style="left:17px;top:409px;width:111px;height:14px;background:#f0f0f0"></div>
<div class="t" style="left:18px;top:407px;font-size:13.5px;line-height:17px;color:#000">RGB Levels</div>
<div style="left:230px;top:407px;width:128px;height:14px;background:#f0f0f0"></div>
<div class="t" style="left:241px;top:406px;font-size:13.5px;line-height:17px;color:#000">Current Measure</div>
<div style="left:14px;top:433px;width:200px;height:86px;background:#f0f0f0"></div>
<svg style="left:14px;top:476px" width="200" height="2"><line x1="0" y1="1" x2="200" y2="1" stroke="#7a7a7a" stroke-dasharray="4 3"/></svg>
<div class="t" style="left:26px;top:494px;font-family:'Liberation Serif',serif;font-weight:bold;font-size:12px;line-height:16px;color:#000">0.0%</div>
<div class="t" style="left:77px;top:494px;font-family:'Liberation Serif',serif;font-weight:bold;font-size:12px;line-height:16px;color:#000">0.0%</div>
<div class="t" style="left:128px;top:494px;font-family:'Liberation Serif',serif;font-weight:bold;font-size:12px;line-height:16px;color:#000">0.0%</div>
<div class="t" style="left:175px;top:494px;font-family:'Liberation Serif',serif;font-weight:bold;font-size:12px;line-height:16px;color:#000">dE 0.0</div>
<svg style="left:0;top:0" width="230" height="530"><path d="M14 514Q39.0 503 64 514Z" fill="#a00000" stroke="#000" stroke-width="1"/><path d="M65 514Q90.0 503 115 514Z" fill="#00a000" stroke="#000" stroke-width="1"/><path d="M116 514Q141.0 503 166 514Z" fill="#0000b0" stroke="#000" stroke-width="1"/><path d="M167 514Q190.5 503 214 514Z" fill="#d09000" stroke="#000" stroke-width="1"/><rect x="14" y="513" width="200" height="6" fill="#000"/></svg>
<div style="left:16px;top:533px;width:192px;height:74px;background:#f0f0f0"></div>
<div class="t" style="left:35px;top:532px;font-weight:bold;font-size:14px;line-height:18px;color:#000;letter-spacing:.2px">Measure</div>
<div class="t" style="left:127px;top:532px;font-weight:bold;font-size:14px;line-height:18px;color:#000;letter-spacing:.2px">Reference</div>
<div class="t" style="left:18px;top:621px;font-size:13.5px;line-height:17px;color:#000">Target</div>
<div style="left:50px;top:638px;width:116px;height:89px;background:conic-gradient(from 0deg at 50% 50%,#40ff00,#ffc800 50deg,#ff0000 90deg,#ff0088 130deg,#8a00c0 180deg,#0000ff 230deg,#0088a8 270deg,#00ff80 310deg,#40ff00 360deg);box-shadow:inset 0 0 0 1px #000"></div>
<svg style="left:50px;top:638px" width="116" height="89"><rect x="17.5" y="13.5" width="81" height="62" rx="9" fill="#000" stroke="#fff"/><g stroke="#fff" stroke-dasharray="3 2" fill="none"><line x1="15" y1="44.5" x2="101" y2="44.5"/><line x1="58.5" y1="13" x2="58.5" y2="76"/><ellipse cx="58" cy="44" rx="21" ry="16"/></g></svg>
<div style="left:220px;top:430px;width:153px;height:578px;background:#f0f0f0;box-shadow:inset 2px 2px 0 #707070,inset -1px -1px 0 #fff"></div>
<div style="left:222px;top:432px;width:52px;height:22px;background:#f0f0f0"></div>
<div style="left:222px;top:454px;width:52px;height:1px;background:#6a6a6a"></div>
<div style="left:274px;top:432px;width:1px;height:23px;background:#6a6a6a"></div>
<div style="left:275px;top:432px;width:79px;height:22px;background:#fff"></div>
<div style="left:275px;top:454px;width:79px;height:1px;background:#b0b0b0"></div>
<div style="left:354px;top:432px;width:1px;height:23px;background:#b0b0b0"></div>
<div class="t" style="left:222px;top:433px;width:53px;text-align:center;font-weight:bold;font-size:12.5px;line-height:22px;color:#000">Y cd/m&#178;</div>
<div style="left:222px;top:455px;width:52px;height:22px;background:#f0f0f0"></div>
<div style="left:222px;top:477px;width:52px;height:1px;background:#6a6a6a"></div>
<div style="left:274px;top:455px;width:1px;height:23px;background:#6a6a6a"></div>
<div style="left:275px;top:455px;width:79px;height:22px;background:#fff"></div>
<div style="left:275px;top:477px;width:79px;height:1px;background:#b0b0b0"></div>
<div style="left:354px;top:455px;width:1px;height:23px;background:#b0b0b0"></div>
<div class="t" style="left:222px;top:456px;width:53px;text-align:center;font-weight:bold;font-size:12.5px;line-height:22px;color:#000">Y ftL</div>
<div style="left:222px;top:478px;width:52px;height:22px;background:#f0f0f0"></div>
<div style="left:222px;top:500px;width:52px;height:1px;background:#6a6a6a"></div>
<div style="left:274px;top:478px;width:1px;height:23px;background:#6a6a6a"></div>
<div style="left:275px;top:478px;width:79px;height:22px;background:#fff"></div>
<div style="left:275px;top:500px;width:79px;height:1px;background:#b0b0b0"></div>
<div style="left:354px;top:478px;width:1px;height:23px;background:#b0b0b0"></div>
<div class="t" style="left:222px;top:479px;width:53px;text-align:center;font-weight:bold;font-size:12.5px;line-height:22px;color:#000">T&#176;</div>
<div style="left:222px;top:501px;width:52px;height:22px;background:#f0f0f0"></div>
<div style="left:222px;top:523px;width:52px;height:1px;background:#6a6a6a"></div>
<div style="left:274px;top:501px;width:1px;height:23px;background:#6a6a6a"></div>
<div style="left:275px;top:501px;width:79px;height:22px;background:#dedede"></div>
<div style="left:275px;top:523px;width:79px;height:1px;background:#b0b0b0"></div>
<div style="left:354px;top:501px;width:1px;height:23px;background:#b0b0b0"></div>
<div class="t" style="left:222px;top:502px;width:53px;text-align:center;font-weight:bold;font-size:12.5px;line-height:22px;color:#000">X</div>
<div style="left:222px;top:524px;width:52px;height:22px;background:#f0f0f0"></div>
<div style="left:222px;top:546px;width:52px;height:1px;background:#6a6a6a"></div>
<div style="left:274px;top:524px;width:1px;height:23px;background:#6a6a6a"></div>
<div style="left:275px;top:524px;width:79px;height:22px;background:#dedede"></div>
<div style="left:275px;top:546px;width:79px;height:1px;background:#b0b0b0"></div>
<div style="left:354px;top:524px;width:1px;height:23px;background:#b0b0b0"></div>
<div class="t" style="left:222px;top:525px;width:53px;text-align:center;font-weight:bold;font-size:12.5px;line-height:22px;color:#000">Y</div>
<div style="left:222px;top:547px;width:52px;height:22px;background:#f0f0f0"></div>
<div style="left:222px;top:569px;width:52px;height:1px;background:#6a6a6a"></div>
<div style="left:274px;top:547px;width:1px;height:23px;background:#6a6a6a"></div>
<div style="left:275px;top:547px;width:79px;height:22px;background:#dedede"></div>
<div style="left:275px;top:569px;width:79px;height:1px;background:#b0b0b0"></div>
<div style="left:354px;top:547px;width:1px;height:23px;background:#b0b0b0"></div>
<div class="t" style="left:222px;top:548px;width:53px;text-align:center;font-weight:bold;font-size:12.5px;line-height:22px;color:#000">Z</div>
<div style="left:222px;top:570px;width:52px;height:22px;background:#f0f0f0"></div>
<div style="left:222px;top:592px;width:52px;height:1px;background:#6a6a6a"></div>
<div style="left:274px;top:570px;width:1px;height:23px;background:#6a6a6a"></div>
<div style="left:275px;top:570px;width:79px;height:22px;background:#fff"></div>
<div style="left:275px;top:592px;width:79px;height:1px;background:#b0b0b0"></div>
<div style="left:354px;top:570px;width:1px;height:23px;background:#b0b0b0"></div>
<div class="t" style="left:222px;top:571px;width:53px;text-align:center;font-weight:bold;font-size:12.5px;line-height:22px;color:#000">R</div>
<div style="left:222px;top:593px;width:52px;height:22px;background:#f0f0f0"></div>
<div style="left:222px;top:615px;width:52px;height:1px;background:#6a6a6a"></div>
<div style="left:274px;top:593px;width:1px;height:23px;background:#6a6a6a"></div>
<div style="left:275px;top:593px;width:79px;height:22px;background:#fff"></div>
<div style="left:275px;top:615px;width:79px;height:1px;background:#b0b0b0"></div>
<div style="left:354px;top:593px;width:1px;height:23px;background:#b0b0b0"></div>
<div class="t" style="left:222px;top:594px;width:53px;text-align:center;font-weight:bold;font-size:12.5px;line-height:22px;color:#000">G</div>
<div style="left:222px;top:616px;width:52px;height:22px;background:#f0f0f0"></div>
<div style="left:222px;top:638px;width:52px;height:1px;background:#6a6a6a"></div>
<div style="left:274px;top:616px;width:1px;height:23px;background:#6a6a6a"></div>
<div style="left:275px;top:616px;width:79px;height:22px;background:#fff"></div>
<div style="left:275px;top:638px;width:79px;height:1px;background:#b0b0b0"></div>
<div style="left:354px;top:616px;width:1px;height:23px;background:#b0b0b0"></div>
<div class="t" style="left:222px;top:617px;width:53px;text-align:center;font-weight:bold;font-size:12.5px;line-height:22px;color:#000">B</div>
<div style="left:222px;top:639px;width:52px;height:22px;background:#f0f0f0"></div>
<div style="left:222px;top:661px;width:52px;height:1px;background:#6a6a6a"></div>
<div style="left:274px;top:639px;width:1px;height:23px;background:#6a6a6a"></div>
<div style="left:275px;top:639px;width:79px;height:22px;background:#dedede"></div>
<div style="left:275px;top:661px;width:79px;height:1px;background:#b0b0b0"></div>
<div style="left:354px;top:639px;width:1px;height:23px;background:#b0b0b0"></div>
<div class="t" style="left:222px;top:640px;width:53px;text-align:center;font-weight:bold;font-size:12.5px;line-height:22px;color:#000">x</div>
<div style="left:222px;top:662px;width:52px;height:22px;background:#f0f0f0"></div>
<div style="left:222px;top:684px;width:52px;height:1px;background:#6a6a6a"></div>
<div style="left:274px;top:662px;width:1px;height:23px;background:#6a6a6a"></div>
<div style="left:275px;top:662px;width:79px;height:22px;background:#dedede"></div>
<div style="left:275px;top:684px;width:79px;height:1px;background:#b0b0b0"></div>
<div style="left:354px;top:662px;width:1px;height:23px;background:#b0b0b0"></div>
<div class="t" style="left:222px;top:663px;width:53px;text-align:center;font-weight:bold;font-size:12.5px;line-height:22px;color:#000">y</div>
<div style="left:222px;top:685px;width:52px;height:22px;background:#f0f0f0"></div>
<div style="left:222px;top:707px;width:52px;height:1px;background:#6a6a6a"></div>
<div style="left:274px;top:685px;width:1px;height:23px;background:#6a6a6a"></div>
<div style="left:275px;top:685px;width:79px;height:22px;background:#dedede"></div>
<div style="left:275px;top:707px;width:79px;height:1px;background:#b0b0b0"></div>
<div style="left:354px;top:685px;width:1px;height:23px;background:#b0b0b0"></div>
<div class="t" style="left:222px;top:686px;width:53px;text-align:center;font-weight:bold;font-size:12.5px;line-height:22px;color:#000">Y</div>
<div style="left:222px;top:708px;width:52px;height:22px;background:#f0f0f0"></div>
<div style="left:222px;top:730px;width:52px;height:1px;background:#6a6a6a"></div>
<div style="left:274px;top:708px;width:1px;height:23px;background:#6a6a6a"></div>
<div style="left:275px;top:708px;width:79px;height:22px;background:#fff"></div>
<div style="left:275px;top:730px;width:79px;height:1px;background:#b0b0b0"></div>
<div style="left:354px;top:708px;width:1px;height:23px;background:#b0b0b0"></div>
<div class="t" style="left:222px;top:709px;width:53px;text-align:center;font-weight:bold;font-size:12.5px;line-height:22px;color:#000">x</div>
<div style="left:222px;top:731px;width:52px;height:22px;background:#f0f0f0"></div>
<div style="left:222px;top:753px;width:52px;height:1px;background:#6a6a6a"></div>
<div style="left:274px;top:731px;width:1px;height:23px;background:#6a6a6a"></div>
<div style="left:275px;top:731px;width:79px;height:22px;background:#fff"></div>
<div style="left:275px;top:753px;width:79px;height:1px;background:#b0b0b0"></div>
<div style="left:354px;top:731px;width:1px;height:23px;background:#b0b0b0"></div>
<div class="t" style="left:222px;top:732px;width:53px;text-align:center;font-weight:bold;font-size:12.5px;line-height:22px;color:#000">y</div>
<div style="left:222px;top:754px;width:52px;height:22px;background:#f0f0f0"></div>
<div style="left:222px;top:776px;width:52px;height:1px;background:#6a6a6a"></div>
<div style="left:274px;top:754px;width:1px;height:23px;background:#6a6a6a"></div>
<div style="left:275px;top:754px;width:79px;height:22px;background:#fff"></div>
<div style="left:275px;top:776px;width:79px;height:1px;background:#b0b0b0"></div>
<div style="left:354px;top:754px;width:1px;height:23px;background:#b0b0b0"></div>
<div class="t" style="left:222px;top:755px;width:53px;text-align:center;font-weight:bold;font-size:12.5px;line-height:22px;color:#000">z</div>
<div style="left:222px;top:777px;width:52px;height:22px;background:#f0f0f0"></div>
<div style="left:222px;top:799px;width:52px;height:1px;background:#6a6a6a"></div>
<div style="left:274px;top:777px;width:1px;height:23px;background:#6a6a6a"></div>
<div style="left:275px;top:777px;width:79px;height:22px;background:#dedede"></div>
<div style="left:275px;top:799px;width:79px;height:1px;background:#b0b0b0"></div>
<div style="left:354px;top:777px;width:1px;height:23px;background:#b0b0b0"></div>
<div class="t" style="left:222px;top:778px;width:53px;text-align:center;font-weight:bold;font-size:12.5px;line-height:22px;color:#000">L</div>
<div style="left:222px;top:800px;width:52px;height:22px;background:#f0f0f0"></div>
<div style="left:222px;top:822px;width:52px;height:1px;background:#6a6a6a"></div>
<div style="left:274px;top:800px;width:1px;height:23px;background:#6a6a6a"></div>
<div style="left:275px;top:800px;width:79px;height:22px;background:#dedede"></div>
<div style="left:275px;top:822px;width:79px;height:1px;background:#b0b0b0"></div>
<div style="left:354px;top:800px;width:1px;height:23px;background:#b0b0b0"></div>
<div class="t" style="left:222px;top:801px;width:53px;text-align:center;font-weight:bold;font-size:12.5px;line-height:22px;color:#000">a</div>
<div style="left:222px;top:823px;width:52px;height:22px;background:#f0f0f0"></div>
<div style="left:222px;top:845px;width:52px;height:1px;background:#6a6a6a"></div>
<div style="left:274px;top:823px;width:1px;height:23px;background:#6a6a6a"></div>
<div style="left:275px;top:823px;width:79px;height:22px;background:#dedede"></div>
<div style="left:275px;top:845px;width:79px;height:1px;background:#b0b0b0"></div>
<div style="left:354px;top:823px;width:1px;height:23px;background:#b0b0b0"></div>
<div class="t" style="left:222px;top:824px;width:53px;text-align:center;font-weight:bold;font-size:12.5px;line-height:22px;color:#000">b</div>
<div style="left:222px;top:846px;width:52px;height:22px;background:#f0f0f0"></div>
<div style="left:222px;top:868px;width:52px;height:1px;background:#6a6a6a"></div>
<div style="left:274px;top:846px;width:1px;height:23px;background:#6a6a6a"></div>
<div style="left:275px;top:846px;width:79px;height:22px;background:#fff"></div>
<div style="left:275px;top:868px;width:79px;height:1px;background:#b0b0b0"></div>
<div style="left:354px;top:846px;width:1px;height:23px;background:#b0b0b0"></div>
<div class="t" style="left:222px;top:847px;width:53px;text-align:center;font-weight:bold;font-size:12.5px;line-height:22px;color:#000">L</div>
<div style="left:222px;top:869px;width:52px;height:22px;background:#f0f0f0"></div>
<div style="left:222px;top:891px;width:52px;height:1px;background:#6a6a6a"></div>
<div style="left:274px;top:869px;width:1px;height:23px;background:#6a6a6a"></div>
<div style="left:275px;top:869px;width:79px;height:22px;background:#fff"></div>
<div style="left:275px;top:891px;width:79px;height:1px;background:#b0b0b0"></div>
<div style="left:354px;top:869px;width:1px;height:23px;background:#b0b0b0"></div>
<div class="t" style="left:222px;top:870px;width:53px;text-align:center;font-weight:bold;font-size:12.5px;line-height:22px;color:#000">C</div>
<div style="left:222px;top:892px;width:52px;height:22px;background:#f0f0f0"></div>
<div style="left:222px;top:914px;width:52px;height:1px;background:#6a6a6a"></div>
<div style="left:274px;top:892px;width:1px;height:23px;background:#6a6a6a"></div>
<div style="left:275px;top:892px;width:79px;height:22px;background:#fff"></div>
<div style="left:275px;top:914px;width:79px;height:1px;background:#b0b0b0"></div>
<div style="left:354px;top:892px;width:1px;height:23px;background:#b0b0b0"></div>
<div class="t" style="left:222px;top:893px;width:53px;text-align:center;font-weight:bold;font-size:12.5px;line-height:22px;color:#000">H</div>
<div style="left:222px;top:915px;width:52px;height:22px;background:#f0f0f0"></div>
<div style="left:222px;top:937px;width:52px;height:1px;background:#6a6a6a"></div>
<div style="left:274px;top:915px;width:1px;height:23px;background:#6a6a6a"></div>
<div style="left:275px;top:915px;width:79px;height:22px;background:#dedede"></div>
<div style="left:275px;top:937px;width:79px;height:1px;background:#b0b0b0"></div>
<div style="left:354px;top:915px;width:1px;height:23px;background:#b0b0b0"></div>
<div class="t" style="left:222px;top:916px;width:53px;text-align:center;font-weight:bold;font-size:12.5px;line-height:22px;color:#000">L</div>
<div style="left:222px;top:938px;width:52px;height:22px;background:#f0f0f0"></div>
<div style="left:222px;top:960px;width:52px;height:1px;background:#6a6a6a"></div>
<div style="left:274px;top:938px;width:1px;height:23px;background:#6a6a6a"></div>
<div style="left:275px;top:938px;width:79px;height:22px;background:#dedede"></div>
<div style="left:275px;top:960px;width:79px;height:1px;background:#b0b0b0"></div>
<div style="left:354px;top:938px;width:1px;height:23px;background:#b0b0b0"></div>
<div class="t" style="left:222px;top:939px;width:53px;text-align:center;font-weight:bold;font-size:12.5px;line-height:22px;color:#000">M</div>
<div style="left:222px;top:961px;width:52px;height:22px;background:#f0f0f0"></div>
<div style="left:222px;top:983px;width:52px;height:1px;background:#6a6a6a"></div>
<div style="left:274px;top:961px;width:1px;height:23px;background:#6a6a6a"></div>
<div style="left:275px;top:961px;width:79px;height:22px;background:#dedede"></div>
<div style="left:275px;top:983px;width:79px;height:1px;background:#b0b0b0"></div>
<div style="left:354px;top:961px;width:1px;height:23px;background:#b0b0b0"></div>
<div class="t" style="left:222px;top:962px;width:53px;text-align:center;font-weight:bold;font-size:12.5px;line-height:22px;color:#000">S</div>
<div style="left:222px;top:984px;width:133px;height:22px;background:#a0a0a0"></div>
<div style="left:355px;top:432px;width:17px;height:575px;background:#f0f0f0"></div>
<svg style="left:358px;top:436px" width="12" height="10"><path d="M1.5 8H10.5L6 2.5Z" fill="#a8a8a8"/></svg>
<svg style="left:358px;top:993px" width="12" height="10"><path d="M1.5 2H10.5L6 7.5Z" fill="#a8a8a8"/></svg>
<div style="left:392px;top:406px;width:1501px;height:608px;background:#eaeaea"></div>
<div style="left:396px;top:409px;width:301px;height:23px;background:#707070;box-shadow:inset -1px -1px 0 #fff"></div>
<div style="left:398px;top:411px;width:298px;height:20px;background:#fff"></div>
<div style="left:400px;top:413px;width:279px;height:16px;background:#0078d7"></div>
<div class="t" style="left:401px;top:412px;font-size:14.2px;line-height:18px;color:#fff">Saturation Luminance - Shift</div>
<div style="left:679px;top:411px;width:17px;height:20px;background:#f0f0f0;box-shadow:inset -1px -1px 0 #707070,inset 1px 1px 0 #fff"></div>
<svg style="left:682px;top:418px" width="11" height="7"><path d="M0.5 0.5H10.5L5.5 6Z" fill="#000"/></svg>
<div style="left:398px;top:439px;width:748px;height:569px;background:#fff;box-shadow:inset 2px 2px 0 #8a8a8a,inset 4px 4px 0 #6a6a6a"></div>
<div style="left:1146px;top:439px;width:748px;height:569px;background:#fff;box-shadow:inset 2px 2px 0 #8a8a8a,inset 4px 4px 0 #6a6a6a"></div>
<svg style="left:402px;top:443px" width="740" height="562"><defs><linearGradient id="g1" x1="0" y1="0" x2="1" y2="0"><stop offset="0" stop-color="#222"/><stop offset="1" stop-color="#fafafa"/></linearGradient></defs><rect x="0" y="0" width="740" height="562" fill="url(#g1)"/><g stroke="#0b4242" stroke-width="1" shape-rendering="crispEdges"><line x1="0.5" y1="0" x2="0.5" y2="562"/><line x1="74.5" y1="0" x2="74.5" y2="562"/><line x1="148.5" y1="0" x2="148.5" y2="562"/><line x1="222.5" y1="0" x2="222.5" y2="562"/><line x1="296.5" y1="0" x2="296.5" y2="562"/><line x1="370.5" y1="0" x2="370.5" y2="562"/><line x1="444.5" y1="0" x2="444.5" y2="562"/><line x1="518.5" y1="0" x2="518.5" y2="562"/><line x1="592.5" y1="0" x2="592.5" y2="562"/><line x1="666.5" y1="0" x2="666.5" y2="562"/><line x1="0" y1="56.5" x2="740" y2="56.5"/><line x1="0" y1="112.5" x2="740" y2="112.5"/><line x1="0" y1="168.5" x2="740" y2="168.5"/><line x1="0" y1="224.5" x2="740" y2="224.5"/><line x1="0" y1="281.5" x2="740" y2="281.5"/><line x1="0" y1="337.5" x2="740" y2="337.5"/><line x1="0" y1="393.5" x2="740" y2="393.5"/><line x1="0" y1="449.5" x2="740" y2="449.5"/><line x1="0" y1="505.5" x2="740" y2="505.5"/></g></svg>
<div class="t inv" style="left:404px;top:483.7px;font-size:14px;line-height:16px;color:rgb(221,221,221)">90%</div>
<div class="t inv" style="left:404px;top:539.9px;font-size:14px;line-height:16px;color:rgb(221,221,221)">80%</div>
<div class="t inv" style="left:404px;top:596.1px;font-size:14px;line-height:16px;color:rgb(221,221,221)">70%</div>
<div class="t inv" style="left:404px;top:652.3px;font-size:14px;line-height:16px;color:rgb(221,221,221)">60%</div>
<div class="t inv" style="left:404px;top:708.5px;font-size:14px;line-height:16px;color:rgb(221,221,221)">50%</div>
<div class="t inv" style="left:404px;top:764.7px;font-size:14px;line-height:16px;color:rgb(221,221,221)">40%</div>
<div class="t inv" style="left:404px;top:820.9000000000001px;font-size:14px;line-height:16px;color:rgb(221,221,221)">30%</div>
<div class="t inv" style="left:404px;top:877.1px;font-size:14px;line-height:16px;color:rgb(221,221,221)">20%</div>
<div class="t inv" style="left:404px;top:933.3px;font-size:14px;line-height:16px;color:rgb(221,221,221)">10%</div>
<div class="t inv" style="left:478px;top:989px;font-size:14px;line-height:16px;color:rgb(221,221,221)">10% Sat</div>
<div class="t inv" style="left:552px;top:989px;font-size:14px;line-height:16px;color:rgb(199,199,199)">20% Sat</div>
<div class="t inv" style="left:626px;top:989px;font-size:14px;line-height:16px;color:rgb(178,178,178)">30% Sat</div>
<div class="t inv" style="left:700px;top:989px;font-size:14px;line-height:16px;color:rgb(156,156,156)">40% Sat</div>
<div class="t inv" style="left:774px;top:989px;font-size:14px;line-height:16px;color:rgb(135,135,135)">50% Sat</div>
<div class="t inv" style="left:848px;top:989px;font-size:14px;line-height:16px;color:rgb(113,113,113)">60% Sat</div>
<div class="t inv" style="left:922px;top:989px;font-size:14px;line-height:16px;color:rgb(91,91,91)">70% Sat</div>
<div class="t inv" style="left:996px;top:989px;font-size:14px;line-height:16px;color:rgb(70,70,70)">80% Sat</div>
<div class="t inv" style="left:1070px;top:989px;font-size:14px;line-height:16px;color:rgb(48,48,48)">90% Sat</div>
<div class="t" style="left:682px;top:444px;font-weight:bold;font-size:14.7px;line-height:17px;color:#dede00">Saturation Sweep Luminance</div>
<div class="t" style="left:977px;top:948px;font-weight:bold;font-size:16px;line-height:19px;color:#8e8e8e">hcfr.sourceforge.net</div>
<svg style="left:402px;top:443px" width="740" height="562"><polyline points="0.0,39.3 74.0,41.9 148.0,42.8 222.0,43.8 296.0,47.8 370.0,53.0 444.0,49.2 518.0,53.0 592.0,48.6 666.0,46.3 740.0,53.0" fill="none" stroke="#ffff00" stroke-width="3"/><rect x="-4" y="35.3" width="8" height="8" fill="#ffff00"/><rect x="70" y="37.9" width="8" height="8" fill="#ffff00"/><rect x="144" y="38.8" width="8" height="8" fill="#ffff00"/><rect x="218" y="39.8" width="8" height="8" fill="#ffff00"/><rect x="292" y="43.8" width="8" height="8" fill="#ffff00"/><rect x="366" y="49.0" width="8" height="8" fill="#ffff00"/><rect x="440" y="45.2" width="8" height="8" fill="#ffff00"/><rect x="514" y="49.0" width="8" height="8" fill="#ffff00"/><rect x="588" y="44.6" width="8" height="8" fill="#ffff00"/><rect x="662" y="42.3" width="8" height="8" fill="#ffff00"/><rect x="736" y="49.0" width="8" height="8" fill="#ffff00"/><polyline points="0.0,37.9 74.0,39.3 148.0,39.3 222.0,37.9 296.0,41.9 370.0,41.0 444.0,38.8 518.0,41.9 592.0,39.9 666.0,37.0 740.0,39.9" fill="none" stroke="#808000" stroke-width="1.2" stroke-dasharray="4 4"/><rect x="-4" y="33.4" width="8" height="9" fill="#808000"/><rect x="70" y="34.8" width="8" height="9" fill="#808000"/><rect x="144" y="34.8" width="8" height="9" fill="#808000"/><rect x="218" y="33.4" width="8" height="9" fill="#808000"/><rect x="292" y="37.4" width="8" height="9" fill="#808000"/><rect x="366" y="36.5" width="8" height="9" fill="#808000"/><rect x="440" y="34.3" width="8" height="9" fill="#808000"/><rect x="514" y="37.4" width="8" height="9" fill="#808000"/><rect x="588" y="35.4" width="8" height="9" fill="#808000"/><rect x="662" y="32.5" width="8" height="9" fill="#808000"/><rect x="736" y="35.4" width="8" height="9" fill="#808000"/><polyline points="0.0,116.1 74.0,116.1 148.0,121.5 222.0,122.0 296.0,122.0 370.0,122.6 444.0,125.2 518.0,120.3 592.0,124.8 666.0,123.7 740.0,124.1" fill="none" stroke="#00ffff" stroke-width="3"/><rect x="-4" y="112.1" width="8" height="8" fill="#00ffff"/><rect x="70" y="112.1" width="8" height="8" fill="#00ffff"/><rect x="144" y="117.5" width="8" height="8" fill="#00ffff"/><rect x="218" y="118.0" width="8" height="8" fill="#00ffff"/><rect x="292" y="118.0" width="8" height="8" fill="#00ffff"/><rect x="366" y="118.6" width="8" height="8" fill="#00ffff"/><rect x="440" y="121.2" width="8" height="8" fill="#00ffff"/><rect x="514" y="116.3" width="8" height="8" fill="#00ffff"/><rect x="588" y="120.8" width="8" height="8" fill="#00ffff"/><rect x="662" y="119.7" width="8" height="8" fill="#00ffff"/><rect x="736" y="120.1" width="8" height="8" fill="#00ffff"/><polyline points="0.0,116.0 74.0,117.7 148.0,118.7 222.0,117.0 296.0,118.0 370.0,118.8 444.0,119.7 518.0,117.0 592.0,117.7 666.0,117.7 740.0,119.2" fill="none" stroke="#008080" stroke-width="1.2" stroke-dasharray="4 4"/><rect x="-4" y="111.5" width="8" height="9" fill="#008080"/><rect x="70" y="113.2" width="8" height="9" fill="#008080"/><rect x="144" y="114.2" width="8" height="9" fill="#008080"/><rect x="218" y="112.5" width="8" height="9" fill="#008080"/><rect x="292" y="113.5" width="8" height="9" fill="#008080"/><rect x="366" y="114.3" width="8" height="9" fill="#008080"/><rect x="440" y="115.2" width="8" height="9" fill="#008080"/><rect x="514" y="112.5" width="8" height="9" fill="#008080"/><rect x="588" y="113.2" width="8" height="9" fill="#008080"/><rect x="662" y="113.2" width="8" height="9" fill="#008080"/><rect x="736" y="114.7" width="8" height="9" fill="#008080"/><polyline points="0.0,157.7 74.0,161.7 148.0,161.7 222.0,162.2 296.0,162.6 370.0,162.1 444.0,165.9 518.0,165.9 592.0,165.9 666.0,169.9 740.0,168.1" fill="none" stroke="#00ff00" stroke-width="3"/><rect x="-4" y="153.7" width="8" height="8" fill="#00ff00"/><rect x="70" y="157.7" width="8" height="8" fill="#00ff00"/><rect x="144" y="157.7" width="8" height="8" fill="#00ff00"/><rect x="218" y="158.2" width="8" height="8" fill="#00ff00"/><rect x="292" y="158.6" width="8" height="8" fill="#00ff00"/><rect x="366" y="158.1" width="8" height="8" fill="#00ff00"/><rect x="440" y="161.9" width="8" height="8" fill="#00ff00"/><rect x="514" y="161.9" width="8" height="8" fill="#00ff00"/><rect x="588" y="161.9" width="8" height="8" fill="#00ff00"/><rect x="662" y="165.9" width="8" height="8" fill="#00ff00"/><rect x="736" y="164.1" width="8" height="8" fill="#00ff00"/><polyline points="0.0,158.3 74.0,157.7 148.0,156.7 222.0,159.3 296.0,157.7 370.0,158.1 444.0,159.9 518.0,156.6 592.0,157.0 666.0,160.8 740.0,160.3" fill="none" stroke="#008000" stroke-width="1.2" stroke-dasharray="4 4"/><rect x="-4" y="153.8" width="8" height="9" fill="#008000"/><rect x="70" y="153.2" width="8" height="9" fill="#008000"/><rect x="144" y="152.2" width="8" height="9" fill="#008000"/><rect x="218" y="154.8" width="8" height="9" fill="#008000"/><rect x="292" y="153.2" width="8" height="9" fill="#008000"/><rect x="366" y="153.6" width="8" height="9" fill="#008000"/><rect x="440" y="155.4" width="8" height="9" fill="#008000"/><rect x="514" y="152.1" width="8" height="9" fill="#008000"/><rect x="588" y="152.5" width="8" height="9" fill="#008000"/><rect x="662" y="156.3" width="8" height="9" fill="#008000"/><rect x="736" y="155.8" width="8" height="9" fill="#008000"/><polyline points="0.0,398.7 74.0,395.5 148.0,399.7 222.0,399.7 296.0,399.7 370.0,402.4 444.0,401.0 518.0,401.0 592.0,399.8 666.0,400.4 740.0,403.4" fill="none" stroke="#ff00ff" stroke-width="3"/><rect x="-4" y="394.7" width="8" height="8" fill="#ff00ff"/><rect x="70" y="391.5" width="8" height="8" fill="#ff00ff"/><rect x="144" y="395.7" width="8" height="8" fill="#ff00ff"/><rect x="218" y="395.7" width="8" height="8" fill="#ff00ff"/><rect x="292" y="395.7" width="8" height="8" fill="#ff00ff"/><rect x="366" y="398.4" width="8" height="8" fill="#ff00ff"/><rect x="440" y="397.0" width="8" height="8" fill="#ff00ff"/><rect x="514" y="397.0" width="8" height="8" fill="#ff00ff"/><rect x="588" y="395.8" width="8" height="8" fill="#ff00ff"/><rect x="662" y="396.4" width="8" height="8" fill="#ff00ff"/><rect x="736" y="399.4" width="8" height="8" fill="#ff00ff"/><polyline points="0.0,400.8 74.0,397.6 148.0,399.7 222.0,398.0 296.0,399.0 370.0,399.0 444.0,400.0 518.0,400.5 592.0,399.3 666.0,400.4 740.0,401.4" fill="none" stroke="#800080" stroke-width="1.2" stroke-dasharray="4 4"/><rect x="-4" y="396.2" width="8" height="9" fill="#800080"/><rect x="70" y="393.1" width="8" height="9" fill="#800080"/><rect x="144" y="395.2" width="8" height="9" fill="#800080"/><rect x="218" y="393.5" width="8" height="9" fill="#800080"/><rect x="292" y="394.5" width="8" height="9" fill="#800080"/><rect x="366" y="394.5" width="8" height="9" fill="#800080"/><rect x="440" y="395.5" width="8" height="9" fill="#800080"/><rect x="514" y="396.0" width="8" height="9" fill="#800080"/><rect x="588" y="394.8" width="8" height="9" fill="#800080"/><rect x="662" y="395.9" width="8" height="9" fill="#800080"/><rect x="736" y="396.9" width="8" height="9" fill="#800080"/><polyline points="0.0,441.0 74.0,440.5 148.0,441.4 222.0,441.4 296.0,443.0 370.0,442.0 444.0,442.0 518.0,442.0 592.0,441.0 666.0,441.0 740.0,441.5" fill="none" stroke="#ff0000" stroke-width="3"/><rect x="-4" y="437.0" width="8" height="8" fill="#ff0000"/><rect x="70" y="436.5" width="8" height="8" fill="#ff0000"/><rect x="144" y="437.4" width="8" height="8" fill="#ff0000"/><rect x="218" y="437.4" width="8" height="8" fill="#ff0000"/><rect x="292" y="439.0" width="8" height="8" fill="#ff0000"/><rect x="366" y="438.0" width="8" height="8" fill="#ff0000"/><rect x="440" y="438.0" width="8" height="8" fill="#ff0000"/><rect x="514" y="438.0" width="8" height="8" fill="#ff0000"/><rect x="588" y="437.0" width="8" height="8" fill="#ff0000"/><rect x="662" y="437.0" width="8" height="8" fill="#ff0000"/><rect x="736" y="437.5" width="8" height="8" fill="#ff0000"/><polyline points="0.0,440.0 74.0,439.9 148.0,439.9 222.0,439.9 296.0,439.9 370.0,440.5 444.0,440.5 518.0,440.5 592.0,440.5 666.0,440.5 740.0,440.5" fill="none" stroke="#800000" stroke-width="1.2" stroke-dasharray="4 4"/><rect x="-4" y="435.5" width="8" height="9" fill="#800000"/><rect x="70" y="435.4" width="8" height="9" fill="#800000"/><rect x="144" y="435.4" width="8" height="9" fill="#800000"/><rect x="218" y="435.4" width="8" height="9" fill="#800000"/><rect x="292" y="435.4" width="8" height="9" fill="#800000"/><rect x="366" y="436.0" width="8" height="9" fill="#800000"/><rect x="440" y="436.0" width="8" height="9" fill="#800000"/><rect x="514" y="436.0" width="8" height="9" fill="#800000"/><rect x="588" y="436.0" width="8" height="9" fill="#800000"/><rect x="662" y="436.0" width="8" height="9" fill="#800000"/><rect x="736" y="436.0" width="8" height="9" fill="#800000"/><polyline points="0.0,519.5 74.0,521.6 148.0,521.6 222.0,521.6 296.0,520.5 370.0,522.8 444.0,522.8 518.0,522.2 592.0,522.8 666.0,521.6 740.0,520.3" fill="none" stroke="#0000ff" stroke-width="3"/><rect x="-4" y="515.5" width="8" height="8" fill="#0000ff"/><rect x="70" y="517.6" width="8" height="8" fill="#0000ff"/><rect x="144" y="517.6" width="8" height="8" fill="#0000ff"/><rect x="218" y="517.6" width="8" height="8" fill="#0000ff"/><rect x="292" y="516.5" width="8" height="8" fill="#0000ff"/><rect x="366" y="518.8" width="8" height="8" fill="#0000ff"/><rect x="440" y="518.8" width="8" height="8" fill="#0000ff"/><rect x="514" y="518.2" width="8" height="8" fill="#0000ff"/><rect x="588" y="518.8" width="8" height="8" fill="#0000ff"/><rect x="662" y="517.6" width="8" height="8" fill="#0000ff"/><rect x="736" y="516.3" width="8" height="8" fill="#0000ff"/><polyline points="0.0,519.5 74.0,520.1 148.0,520.0 222.0,520.0 296.0,520.0 370.0,520.3 444.0,520.3 518.0,520.3 592.0,520.3 666.0,520.3 740.0,520.3" fill="none" stroke="#000080" stroke-width="1.2" stroke-dasharray="4 4"/><rect x="-4" y="515.0" width="8" height="9" fill="#000080"/><rect x="70" y="515.6" width="8" height="9" fill="#000080"/><rect x="144" y="515.5" width="8" height="9" fill="#000080"/><rect x="218" y="515.5" width="8" height="9" fill="#000080"/><rect x="292" y="515.5" width="8" height="9" fill="#000080"/><rect x="366" y="515.8" width="8" height="9" fill="#000080"/><rect x="440" y="515.8" width="8" height="9" fill="#000080"/><rect x="514" y="515.8" width="8" height="9" fill="#000080"/><rect x="588" y="515.8" width="8" height="9" fill="#000080"/><rect x="662" y="515.8" width="8" height="9" fill="#000080"/><rect x="736" y="515.8" width="8" height="9" fill="#000080"/></svg>
<svg style="left:1150px;top:443px" width="740" height="562"><defs><linearGradient id="g2" x1="0" y1="0" x2="1" y2="0"><stop offset="0" stop-color="#222"/><stop offset="1" stop-color="#fafafa"/></linearGradient></defs><rect x="0" y="0" width="740" height="562" fill="url(#g2)"/><g stroke="#0b4242" stroke-width="1" shape-rendering="crispEdges"><line x1="0.5" y1="0" x2="0.5" y2="562"/><line x1="74.5" y1="0" x2="74.5" y2="562"/><line x1="148.5" y1="0" x2="148.5" y2="562"/><line x1="222.5" y1="0" x2="222.5" y2="562"/><line x1="296.5" y1="0" x2="296.5" y2="562"/><line x1="370.5" y1="0" x2="370.5" y2="562"/><line x1="444.5" y1="0" x2="444.5" y2="562"/><line x1="518.5" y1="0" x2="518.5" y2="562"/><line x1="592.5" y1="0" x2="592.5" y2="562"/><line x1="666.5" y1="0" x2="666.5" y2="562"/><line x1="0" y1="35.5" x2="740" y2="35.5"/><line x1="0" y1="70.5" x2="740" y2="70.5"/><line x1="0" y1="105.5" x2="740" y2="105.5"/><line x1="0" y1="175.5" x2="740" y2="175.5"/><line x1="0" y1="210.5" x2="740" y2="210.5"/><line x1="0" y1="245.5" x2="740" y2="245.5"/><line x1="0" y1="309.5" x2="740" y2="309.5"/><line x1="0" y1="337.5" x2="740" y2="337.5"/><line x1="0" y1="365.5" x2="740" y2="365.5"/><line x1="0" y1="393.5" x2="740" y2="393.5"/><line x1="0" y1="421.5" x2="740" y2="421.5"/><line x1="0" y1="449.5" x2="740" y2="449.5"/><line x1="0" y1="477.5" x2="740" y2="477.5"/><line x1="0" y1="505.5" x2="740" y2="505.5"/><line x1="0" y1="533.5" x2="740" y2="533.5"/></g></svg>
<div class="t inv" style="left:1152px;top:462.6px;font-size:14px;line-height:16px;color:rgb(221,221,221)">15%</div>
<div class="t inv" style="left:1152px;top:497.70000000000005px;font-size:14px;line-height:16px;color:rgb(221,221,221)">10%</div>
<div class="t inv" style="left:1152px;top:532.8px;font-size:14px;line-height:16px;color:rgb(221,221,221)">5%</div>
<div class="t inv" style="left:1152px;top:567.9px;font-size:14px;line-height:16px;color:rgb(221,221,221)">0%</div>
<div class="t inv" style="left:1152px;top:603.0px;font-size:14px;line-height:16px;color:rgb(221,221,221)">-5%</div>
<div class="t inv" style="left:1152px;top:638.1px;font-size:14px;line-height:16px;color:rgb(221,221,221)">-10%</div>
<div class="t inv" style="left:1152px;top:673.2px;font-size:14px;line-height:16px;color:rgb(221,221,221)">-15%</div>
<div class="t inv" style="left:1226px;top:707px;font-size:14px;line-height:16px;color:rgb(221,221,221)">10% Sat</div>
<div class="t inv" style="left:1300px;top:707px;font-size:14px;line-height:16px;color:rgb(199,199,199)">20% Sat</div>
<div class="t inv" style="left:1374px;top:707px;font-size:14px;line-height:16px;color:rgb(178,178,178)">30% Sat</div>
<div class="t inv" style="left:1448px;top:707px;font-size:14px;line-height:16px;color:rgb(156,156,156)">40% Sat</div>
<div class="t inv" style="left:1522px;top:707px;font-size:14px;line-height:16px;color:rgb(135,135,135)">50% Sat</div>
<div class="t inv" style="left:1596px;top:707px;font-size:14px;line-height:16px;color:rgb(113,113,113)">60% Sat</div>
<div class="t inv" style="left:1670px;top:707px;font-size:14px;line-height:16px;color:rgb(91,91,91)">70% Sat</div>
<div class="t inv" style="left:1744px;top:707px;font-size:14px;line-height:16px;color:rgb(70,70,70)">80% Sat</div>
<div class="t inv" style="left:1818px;top:707px;font-size:14px;line-height:16px;color:rgb(48,48,48)">90% Sat</div>
<div class="t inv" style="left:1152px;top:736.6px;font-size:14px;line-height:16px;color:rgb(221,221,221)">18</div>
<div class="t inv" style="left:1152px;top:764.7px;font-size:14px;line-height:16px;color:rgb(221,221,221)">16</div>
<div class="t inv" style="left:1152px;top:792.8px;font-size:14px;line-height:16px;color:rgb(221,221,221)">14</div>
<div class="t inv" style="left:1152px;top:820.9px;font-size:14px;line-height:16px;color:rgb(221,221,221)">12</div>
<div class="t inv" style="left:1152px;top:849.0px;font-size:14px;line-height:16px;color:rgb(221,221,221)">10</div>
<div class="t inv" style="left:1152px;top:877.1px;font-size:14px;line-height:16px;color:rgb(221,221,221)">8</div>
<div class="t inv" style="left:1152px;top:905.2px;font-size:14px;line-height:16px;color:rgb(221,221,221)">6</div>
<div class="t inv" style="left:1152px;top:933.3px;font-size:14px;line-height:16px;color:rgb(221,221,221)">4</div>
<div class="t inv" style="left:1152px;top:961.4px;font-size:14px;line-height:16px;color:rgb(221,221,221)">2</div>
<div class="t inv" style="left:1226px;top:989px;font-size:14px;line-height:16px;color:rgb(221,221,221)">10% Sat</div>
<div class="t inv" style="left:1300px;top:989px;font-size:14px;line-height:16px;color:rgb(199,199,199)">20% Sat</div>
<div class="t inv" style="left:1374px;top:989px;font-size:14px;line-height:16px;color:rgb(178,178,178)">30% Sat</div>
<div class="t inv" style="left:1448px;top:989px;font-size:14px;line-height:16px;color:rgb(156,156,156)">40% Sat</div>
<div class="t inv" style="left:1522px;top:989px;font-size:14px;line-height:16px;color:rgb(135,135,135)">50% Sat</div>
<div class="t inv" style="left:1596px;top:989px;font-size:14px;line-height:16px;color:rgb(113,113,113)">60% Sat</div>
<div class="t inv" style="left:1670px;top:989px;font-size:14px;line-height:16px;color:rgb(91,91,91)">70% Sat</div>
<div class="t inv" style="left:1744px;top:989px;font-size:14px;line-height:16px;color:rgb(70,70,70)">80% Sat</div>
<div class="t inv" style="left:1818px;top:989px;font-size:14px;line-height:16px;color:rgb(48,48,48)">90% Sat</div>
<div class="t" style="left:1444px;top:444px;font-weight:bold;font-size:14.7px;line-height:17px;color:#dede00">Saturation Scan Shifts</div>
<div class="t" style="left:1725px;top:948px;font-weight:bold;font-size:16px;line-height:19px;color:#8e8e8e">hcfr.sourceforge.net</div>
<svg style="left:1150px;top:443px" width="740" height="562"><polyline points="0.0,140.0 74.0,138.0 148.0,138.5 222.0,133.0 296.0,134.0 370.0,132.5 444.0,134.8 518.0,135.5 592.0,129.4 666.0,133.4 740.0,133.4" fill="none" stroke="#ff0000" stroke-width="2.2"/><rect x="-4" y="136.0" width="8" height="8" fill="#ff0000"/><rect x="70" y="134.0" width="8" height="8" fill="#ff0000"/><rect x="144" y="134.5" width="8" height="8" fill="#ff0000"/><rect x="218" y="129.0" width="8" height="8" fill="#ff0000"/><rect x="292" y="130.0" width="8" height="8" fill="#ff0000"/><rect x="366" y="128.5" width="8" height="8" fill="#ff0000"/><rect x="440" y="130.8" width="8" height="8" fill="#ff0000"/><rect x="514" y="131.5" width="8" height="8" fill="#ff0000"/><rect x="588" y="125.4" width="8" height="8" fill="#ff0000"/><rect x="662" y="129.4" width="8" height="8" fill="#ff0000"/><rect x="736" y="129.4" width="8" height="8" fill="#ff0000"/><polyline points="0.0,141.0 74.0,143.9 148.0,142.5 222.0,145.5 296.0,142.5 370.0,141.0 444.0,142.5 518.0,140.5 592.0,139.5 666.0,139.5 740.0,134.8" fill="none" stroke="#00ff00" stroke-width="2.2"/><rect x="-4" y="137.0" width="8" height="8" fill="#00ff00"/><rect x="70" y="139.9" width="8" height="8" fill="#00ff00"/><rect x="144" y="138.5" width="8" height="8" fill="#00ff00"/><rect x="218" y="141.5" width="8" height="8" fill="#00ff00"/><rect x="292" y="138.5" width="8" height="8" fill="#00ff00"/><rect x="366" y="137.0" width="8" height="8" fill="#00ff00"/><rect x="440" y="138.5" width="8" height="8" fill="#00ff00"/><rect x="514" y="136.5" width="8" height="8" fill="#00ff00"/><rect x="588" y="135.5" width="8" height="8" fill="#00ff00"/><rect x="662" y="135.5" width="8" height="8" fill="#00ff00"/><rect x="736" y="130.8" width="8" height="8" fill="#00ff00"/><polyline points="0.0,142.5 74.0,146.5 148.0,143.0 222.0,138.5 296.0,142.0 370.0,145.0 444.0,135.5 518.0,135.5 592.0,135.5 666.0,136.5 740.0,134.4" fill="none" stroke="#ffff00" stroke-width="2.2"/><rect x="-4" y="138.5" width="8" height="8" fill="#ffff00"/><rect x="70" y="142.5" width="8" height="8" fill="#ffff00"/><rect x="144" y="139.0" width="8" height="8" fill="#ffff00"/><rect x="218" y="134.5" width="8" height="8" fill="#ffff00"/><rect x="292" y="138.0" width="8" height="8" fill="#ffff00"/><rect x="366" y="141.0" width="8" height="8" fill="#ffff00"/><rect x="440" y="131.5" width="8" height="8" fill="#ffff00"/><rect x="514" y="131.5" width="8" height="8" fill="#ffff00"/><rect x="588" y="131.5" width="8" height="8" fill="#ffff00"/><rect x="662" y="132.5" width="8" height="8" fill="#ffff00"/><rect x="736" y="130.4" width="8" height="8" fill="#ffff00"/><polyline points="0.0,140.0 74.0,134.6 148.0,115.8 222.0,115.8 296.0,120.5 370.0,118.0 444.0,119.0 518.0,128.8 592.0,121.9 666.0,126.4 740.0,138.0" fill="none" stroke="#0000ff" stroke-width="2.2"/><rect x="-4" y="136.0" width="8" height="8" fill="#0000ff"/><rect x="70" y="130.6" width="8" height="8" fill="#0000ff"/><rect x="144" y="111.8" width="8" height="8" fill="#0000ff"/><rect x="218" y="111.8" width="8" height="8" fill="#0000ff"/><rect x="292" y="116.5" width="8" height="8" fill="#0000ff"/><rect x="366" y="114.0" width="8" height="8" fill="#0000ff"/><rect x="440" y="115.0" width="8" height="8" fill="#0000ff"/><rect x="514" y="124.8" width="8" height="8" fill="#0000ff"/><rect x="588" y="117.9" width="8" height="8" fill="#0000ff"/><rect x="662" y="122.4" width="8" height="8" fill="#0000ff"/><rect x="736" y="134.0" width="8" height="8" fill="#0000ff"/><polyline points="0.0,139.5 74.0,132.6 148.0,121.7 222.0,125.7 296.0,113.8 370.0,112.7 444.0,113.8 518.0,109.2 592.0,112.6 666.0,110.6 740.0,121.9" fill="none" stroke="#00ffff" stroke-width="2.2"/><rect x="-4" y="135.5" width="8" height="8" fill="#00ffff"/><rect x="70" y="128.6" width="8" height="8" fill="#00ffff"/><rect x="144" y="117.7" width="8" height="8" fill="#00ffff"/><rect x="218" y="121.7" width="8" height="8" fill="#00ffff"/><rect x="292" y="109.8" width="8" height="8" fill="#00ffff"/><rect x="366" y="108.7" width="8" height="8" fill="#00ffff"/><rect x="440" y="109.8" width="8" height="8" fill="#00ffff"/><rect x="514" y="105.2" width="8" height="8" fill="#00ffff"/><rect x="588" y="108.6" width="8" height="8" fill="#00ffff"/><rect x="662" y="106.6" width="8" height="8" fill="#00ffff"/><rect x="736" y="117.9" width="8" height="8" fill="#00ffff"/><polyline points="0.0,143.9 74.0,141.5 148.0,136.6 222.0,139.7 296.0,142.0 370.0,139.7 444.0,133.6 518.0,140.5 592.0,134.4 666.0,133.4 740.0,131.4" fill="none" stroke="#ff00ff" stroke-width="2.2"/><rect x="-4" y="139.9" width="8" height="8" fill="#ff00ff"/><rect x="70" y="137.5" width="8" height="8" fill="#ff00ff"/><rect x="144" y="132.6" width="8" height="8" fill="#ff00ff"/><rect x="218" y="135.7" width="8" height="8" fill="#ff00ff"/><rect x="292" y="138.0" width="8" height="8" fill="#ff00ff"/><rect x="366" y="135.7" width="8" height="8" fill="#ff00ff"/><rect x="440" y="129.6" width="8" height="8" fill="#ff00ff"/><rect x="514" y="136.5" width="8" height="8" fill="#ff00ff"/><rect x="588" y="130.4" width="8" height="8" fill="#ff00ff"/><rect x="662" y="129.4" width="8" height="8" fill="#ff00ff"/><rect x="736" y="127.4" width="8" height="8" fill="#ff00ff"/><polyline points="0.0,554.0 74.0,554.0 148.0,554.0 222.0,554.0 296.0,554.5 370.0,554.5 444.0,556.5 518.0,559.1 592.0,556.5 666.0,560.0 740.0,555.5" fill="none" stroke="#ff0000" stroke-width="2.2"/><rect x="-4" y="550.0" width="8" height="8" fill="#ff0000"/><rect x="70" y="550.0" width="8" height="8" fill="#ff0000"/><rect x="144" y="550.0" width="8" height="8" fill="#ff0000"/><rect x="218" y="550.0" width="8" height="8" fill="#ff0000"/><rect x="292" y="550.5" width="8" height="8" fill="#ff0000"/><rect x="366" y="550.5" width="8" height="8" fill="#ff0000"/><rect x="440" y="552.5" width="8" height="8" fill="#ff0000"/><rect x="514" y="555.1" width="8" height="8" fill="#ff0000"/><rect x="588" y="552.5" width="8" height="8" fill="#ff0000"/><rect x="662" y="556.0" width="8" height="8" fill="#ff0000"/><rect x="736" y="551.5" width="8" height="8" fill="#ff0000"/><polyline points="0.0,557.5 74.0,556.5 148.0,557.0 222.0,556.5 296.0,559.5 370.0,558.7 444.0,558.5 518.0,554.5 592.0,553.5 666.0,551.9 740.0,554.5" fill="none" stroke="#00ff00" stroke-width="2.2"/><rect x="-4" y="553.5" width="8" height="8" fill="#00ff00"/><rect x="70" y="552.5" width="8" height="8" fill="#00ff00"/><rect x="144" y="553.0" width="8" height="8" fill="#00ff00"/><rect x="218" y="552.5" width="8" height="8" fill="#00ff00"/><rect x="292" y="555.5" width="8" height="8" fill="#00ff00"/><rect x="366" y="554.7" width="8" height="8" fill="#00ff00"/><rect x="440" y="554.5" width="8" height="8" fill="#00ff00"/><rect x="514" y="550.5" width="8" height="8" fill="#00ff00"/><rect x="588" y="549.5" width="8" height="8" fill="#00ff00"/><rect x="662" y="547.9" width="8" height="8" fill="#00ff00"/><rect x="736" y="550.5" width="8" height="8" fill="#00ff00"/><polyline points="0.0,554.5 74.0,547.6 148.0,559.5 222.0,557.5 296.0,554.5 370.0,546.0 444.0,550.5 518.0,548.4 592.0,549.4 666.0,551.9 740.0,549.4" fill="none" stroke="#ffff00" stroke-width="2.2"/><rect x="-4" y="550.5" width="8" height="8" fill="#ffff00"/><rect x="70" y="543.6" width="8" height="8" fill="#ffff00"/><rect x="144" y="555.5" width="8" height="8" fill="#ffff00"/><rect x="218" y="553.5" width="8" height="8" fill="#ffff00"/><rect x="292" y="550.5" width="8" height="8" fill="#ffff00"/><rect x="366" y="542.0" width="8" height="8" fill="#ffff00"/><rect x="440" y="546.5" width="8" height="8" fill="#ffff00"/><rect x="514" y="544.4" width="8" height="8" fill="#ffff00"/><rect x="588" y="545.4" width="8" height="8" fill="#ffff00"/><rect x="662" y="547.9" width="8" height="8" fill="#ffff00"/><rect x="736" y="545.4" width="8" height="8" fill="#ffff00"/><polyline points="0.0,552.5 74.0,533.7 148.0,520.9 222.0,526.8 296.0,545.6 370.0,543.5 444.0,541.4 518.0,553.9 592.0,545.4 666.0,549.4 740.0,554.5" fill="none" stroke="#0000ff" stroke-width="2.2"/><rect x="-4" y="548.5" width="8" height="8" fill="#0000ff"/><rect x="70" y="529.7" width="8" height="8" fill="#0000ff"/><rect x="144" y="516.9" width="8" height="8" fill="#0000ff"/><rect x="218" y="522.8" width="8" height="8" fill="#0000ff"/><rect x="292" y="541.6" width="8" height="8" fill="#0000ff"/><rect x="366" y="539.5" width="8" height="8" fill="#0000ff"/><rect x="440" y="537.4" width="8" height="8" fill="#0000ff"/><rect x="514" y="549.9" width="8" height="8" fill="#0000ff"/><rect x="588" y="541.4" width="8" height="8" fill="#0000ff"/><rect x="662" y="545.4" width="8" height="8" fill="#0000ff"/><rect x="736" y="550.5" width="8" height="8" fill="#0000ff"/><polyline points="0.0,559.5 74.0,555.5 148.0,542.6 222.0,552.1 296.0,545.6 370.0,541.5 444.0,545.4 518.0,536.9 592.0,543.0 666.0,543.8 740.0,539.7" fill="none" stroke="#00ffff" stroke-width="2.2"/><rect x="-4" y="555.5" width="8" height="8" fill="#00ffff"/><rect x="70" y="551.5" width="8" height="8" fill="#00ffff"/><rect x="144" y="538.6" width="8" height="8" fill="#00ffff"/><rect x="218" y="548.1" width="8" height="8" fill="#00ffff"/><rect x="292" y="541.6" width="8" height="8" fill="#00ffff"/><rect x="366" y="537.5" width="8" height="8" fill="#00ffff"/><rect x="440" y="541.4" width="8" height="8" fill="#00ffff"/><rect x="514" y="532.9" width="8" height="8" fill="#00ffff"/><rect x="588" y="539.0" width="8" height="8" fill="#00ffff"/><rect x="662" y="539.8" width="8" height="8" fill="#00ffff"/><rect x="736" y="535.7" width="8" height="8" fill="#00ffff"/><polyline points="0.0,551.6 74.0,553.5 148.0,554.5 222.0,551.6 296.0,553.5 370.0,552.5 444.0,555.5 518.0,557.5 592.0,555.5 666.0,553.5 740.0,555.5" fill="none" stroke="#ff00ff" stroke-width="2.2"/><rect x="-4" y="547.6" width="8" height="8" fill="#ff00ff"/><rect x="70" y="549.5" width="8" height="8" fill="#ff00ff"/><rect x="144" y="550.5" width="8" height="8" fill="#ff00ff"/><rect x="218" y="547.6" width="8" height="8" fill="#ff00ff"/><rect x="292" y="549.5" width="8" height="8" fill="#ff00ff"/><rect x="366" y="548.5" width="8" height="8" fill="#ff00ff"/><rect x="440" y="551.5" width="8" height="8" fill="#ff00ff"/><rect x="514" y="553.5" width="8" height="8" fill="#ff00ff"/><rect x="588" y="551.5" width="8" height="8" fill="#ff00ff"/><rect x="662" y="549.5" width="8" height="8" fill="#ff00ff"/><rect x="736" y="551.5" width="8" height="8" fill="#ff00ff"/><line x1="0" y1="140.5" x2="736" y2="140.5" stroke="#fff" stroke-width="1" stroke-dasharray="3 3" stroke-dashoffset="3" shape-rendering="crispEdges"/><line x1="0" y1="140.5" x2="736" y2="140.5" stroke="#000" stroke-width="1" stroke-dasharray="3 3" shape-rendering="crispEdges"/><rect x="0" y="139" width="4" height="8" fill="#e0e0e0"/></svg>
<div style="left:0px;top:1043px;width:1920px;height:18px;background:#f0f0f0"></div>
<svg style="left:0;top:1040px" width="400" height="22"><path d="M127 2.5H400" stroke="#000"/><path d="M54 2L62 20H120L128 2Z" fill="#fff"/><path d="M54 2L62 20H120L128 2" fill="none" stroke="#000" stroke-width="1"/><path d="M128 2L123.5 11L127 20" fill="none" stroke="#000"/><path d="M197 2L201 11L197 20M201 11L205 20" fill="none" stroke="#000"/><path d="M301 2L305 11L301 20M305 11L309 20" fill="none" stroke="#000"/><path d="M384 2L376 20" fill="none" stroke="#000"/><path d="M62 20.5H376" stroke="#a0a0a0"/><rect x="0.5" y="3.5" width="52" height="17" fill="#f0f0f0" stroke="#000"/><line x1="17.5" y1="3" x2="17.5" y2="21" stroke="#000"/><line x1="34.5" y1="3" x2="34.5" y2="21" stroke="#000"/><path d="M5.5 7.5L12.5 14.5M12.5 7.5L5.5 14.5" stroke="#000" stroke-width="1.3"/><path d="M28 8V15L24 11.5Z" fill="#000"/><path d="M42 8V15L46 11.5Z" fill="#000"/></svg>
<div style="left:400px;top:1042px;width:1520px;height:1px;background:#000"></div>
<div class="t" style="left:66px;top:1044px;font-weight:bold;font-size:10.8px;line-height:16px;color:#000">Measures</div>
<div class="t" style="left:135px;top:1044px;font-size:9.4px;line-height:16px;color:#000">CIE Diagram</div>
<div class="t" style="left:216px;top:1044px;font-size:9.4px;line-height:16px;color:#000">Color temperature</div>
<div class="t" style="left:318px;top:1044px;font-size:9.4px;line-height:16px;color:#000">RGB Levels</div>
<svg style="left:1750px;top:1043px" width="16" height="16"><path d="M1 1H14V12L11 15H4L1 12Z" fill="#9a8a20" stroke="#333" stroke-width=".8"/><rect x="4" y="3" width="7" height="5" fill="#e02020"/><circle cx="11" cy="13" r="2.5" fill="#f0e020"/></svg>
<div style="left:1846px;top:1044px;width:12px;height:12px;background:#fff;box-shadow:inset 1px 1px 0 #333,inset -1px -1px 0 #dcdcdc"></div>
<div class="t" style="left:1864px;top:1043px;font-size:11px;line-height:16px;color:#000">Reference</div>
<div style="left:0px;top:1061px;width:1920px;height:19px;background:#ebf0f8"></div>
<div class="t" style="left:3px;top:1063px;font-size:11.5px;line-height:16px;color:#000">Ready</div>
<div style="left:1743px;top:1062px;width:74px;height:18px;box-shadow:inset 1px 1px 0 #a8b8d0"></div>
<div style="left:1820px;top:1062px;width:28px;height:18px;box-shadow:inset 1px 1px 0 #a8b8d0"></div>
<div style="left:1851px;top:1062px;width:33px;height:18px;box-shadow:inset 1px 1px 0 #a8b8d0"></div>
<div style="left:1887px;top:1062px;width:33px;height:18px;box-shadow:inset 1px 1px 0 #a8b8d0"></div>
<div class="t" style="left:1853px;top:1064px;font-size:12.5px;line-height:16px;color:#000">NUM</div>
</body></html>
